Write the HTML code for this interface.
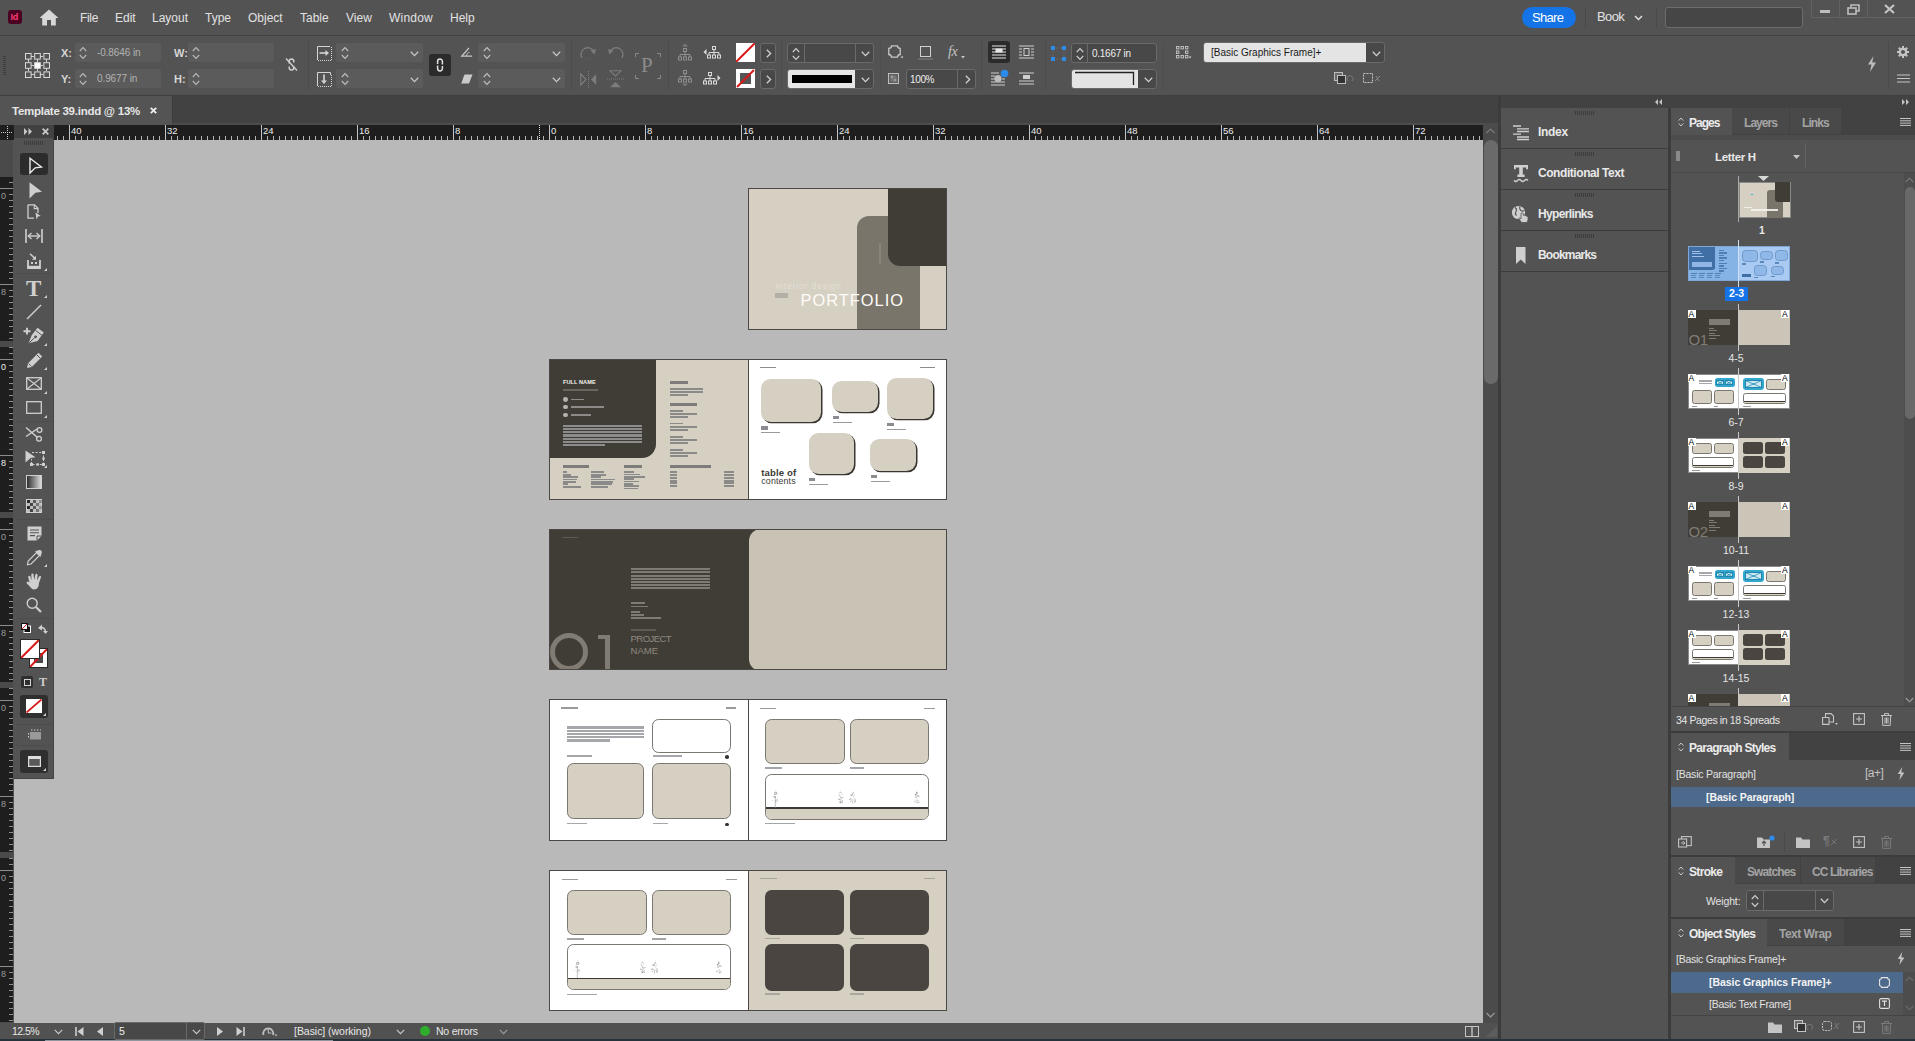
<!DOCTYPE html>
<html><head><meta charset="utf-8"><title>InDesign</title>
<style>
*{box-sizing:border-box;margin:0;padding:0}
html,body{width:1915px;height:1041px;overflow:hidden;background:#535353;font-family:"Liberation Sans",sans-serif;color:#dcdcdc;font-size:12px}
.a{position:absolute}
.t{position:absolute;white-space:nowrap;line-height:1}
svg{position:absolute;overflow:visible}
.fld{position:absolute;background:#5b5b5b;border-radius:2px}
.dfld{position:absolute;background:#484848;border:1px solid #6a6a6a;border-radius:3px}
.sep{position:absolute;background:#4b4b4b;width:1px}
.b{font-weight:bold}
</style></head><body>
<div id="app" class="a" style="left:0;top:0;width:1915px;height:1041px;background:#535353;overflow:hidden">
<!-- frame lines -->
<div class="a" style="left:0;top:35px;width:1915px;height:1px;background:#424242"></div>
<div class="a" style="left:0;top:95px;width:1915px;height:1px;background:#3f3f3f"></div>
<!-- tab bar -->
<div class="a" style="left:0;top:96px;width:1500px;height:29px;background:#424242"></div>
<div class="a" style="left:0;top:123px;width:1498px;height:2px;background:#4c4c4c"></div>
<div class="a" style="left:0;top:96px;width:172px;height:29px;background:#545454"></div><div class="a" style="left:172px;top:96px;width:1px;height:27px;background:#3c3c3c"></div>
<div class="t b" style="left:12px;top:106px;font-size:11.5px;color:#e6e6e6;letter-spacing:-0.26px">Template 39.indd @ 13%</div>
<svg style="left:149.5px;top:106.5px" width="7" height="7" viewBox="0 0 7 7"><path d="M0.8 0.8L6.2 6.2M6.2 0.8L0.8 6.2" stroke="#ececec" stroke-width="1.9"/></svg>
<!-- pasteboard -->
<div class="a" style="left:14px;top:140px;width:1469px;height:883px;background:#b9b9b9"></div>
<!-- vertical scrollbar -->
<div class="a" style="left:1483px;top:125px;width:15px;height:898px;background:#4b4b4b"></div>
<div class="a" style="left:1484px;top:140px;width:14px;height:244px;background:#6a6a6a;border-radius:7px"></div>
<svg style="left:1486px;top:128px" width="9" height="6" viewBox="0 0 9 6"><path d="M0.5 5L4.5 1L8.5 5" stroke="#7a7a7a" stroke-width="1.2" fill="none"/></svg>
<svg style="left:1486px;top:1012px" width="9" height="6" viewBox="0 0 9 6"><path d="M0.5 1L4.5 5L8.5 1" stroke="#9a9a9a" stroke-width="1.2" fill="none"/></svg>
<!-- status bar -->
<div class="a" style="left:0;top:1023px;width:1500px;height:18px;background:#515151"></div>
<!-- dock borders -->
<div class="a" style="left:1498px;top:96px;width:3px;height:945px;background:#3c3c3c"></div>
<div class="a" style="left:1501px;top:96px;width:414px;height:12px;background:#424242"></div>
<div class="a" style="left:1668px;top:108px;width:3px;height:933px;background:#3c3c3c"></div>
<!-- menu bar -->
<div class="a" style="left:8px;top:10px;width:14px;height:14px;background:#49021f;border-radius:3px"></div>
<div class="t b" style="left:10.5px;top:12.5px;font-size:9px;color:#ff3d78;letter-spacing:-0.3px">Id</div>
<svg style="left:39px;top:9px" width="20" height="17" viewBox="0 0 20 17"><path d="M10 0.5L0.5 9H3.2V16.5H8V11H12V16.5H16.8V9H19.5Z" fill="#d8d8d8"/></svg>
<div class="t" style="left:80px;top:12px;font-size:12px;color:#e2e2e2;letter-spacing:-0.33px">File</div>
<div class="t" style="left:115px;top:12px;font-size:12px;color:#e2e2e2">Edit</div>
<div class="t" style="left:152px;top:12px;font-size:12px;color:#e2e2e2">Layout</div>
<div class="t" style="left:205px;top:12px;font-size:12px;color:#e2e2e2">Type</div>
<div class="t" style="left:248px;top:12px;font-size:12px;color:#e2e2e2">Object</div>
<div class="t" style="left:300px;top:12px;font-size:12px;color:#e2e2e2">Table</div>
<div class="t" style="left:346px;top:12px;font-size:12px;color:#e2e2e2">View</div>
<div class="t" style="left:389px;top:12px;font-size:12px;color:#e2e2e2;letter-spacing:0.2px">Window</div>
<div class="t" style="left:450px;top:12px;font-size:12px;color:#e2e2e2">Help</div>
<!-- right side of menu bar -->
<div class="a" style="left:1522px;top:7px;width:54px;height:21px;background:#1473e6;border-radius:11px"></div>
<div class="t" style="left:1532px;top:11px;font-size:13px;color:#fff;letter-spacing:-0.7px">Share</div>
<div class="sep" style="left:1585px;top:8px;height:20px;background:#494949"></div>
<div class="t" style="left:1597px;top:10px;font-size:13px;color:#e4e4e4;letter-spacing:-0.6px">Book</div>
<svg style="left:1634px;top:15px" width="9" height="6" viewBox="0 0 9 6"><path d="M1 1L4.5 4.5L8 1" stroke="#e0e0e0" stroke-width="1.5" fill="none"/></svg>
<div class="sep" style="left:1656px;top:8px;height:20px;background:#494949"></div>
<div class="a" style="left:1665px;top:7px;width:138px;height:21px;background:#464646;border:1px solid #6c6c6c;border-radius:3px"></div>
<!-- window controls -->
<div class="a" style="left:1811px;top:0;width:104px;height:18px;border:1px solid #626262;border-top:0;border-right:0"></div>
<div class="a" style="left:1839px;top:0;width:1px;height:18px;background:#626262"></div>
<div class="a" style="left:1867px;top:0;width:1px;height:18px;background:#626262"></div>
<div class="a" style="left:1820px;top:10px;width:10px;height:3px;background:#bdbdbd"></div>
<svg style="left:1847px;top:4px" width="13" height="11" viewBox="0 0 13 11"><path d="M4 3V1H12V7H9" stroke="#bdbdbd" stroke-width="1.6" fill="none"/><rect x="1" y="4" width="8" height="6" stroke="#bdbdbd" stroke-width="1.6" fill="none"/></svg>
<svg style="left:1884px;top:4px" width="11" height="10" viewBox="0 0 11 10"><path d="M1 1L10 9M10 1L1 9" stroke="#c4c4c4" stroke-width="2.2"/></svg>
<!-- control bar -->
<div class="a" style="left:3px;top:56px;width:3px;height:19px;background:repeating-linear-gradient(to bottom,#3d3d3d 0 1px,transparent 1px 2px)"></div>
<svg style="left:25px;top:53px" width="25" height="25" viewBox="0 0 25 25"><path d="M6 3.5H9M15 3.5H18M6 12.5H9M15 12.5H18M6 21.5H9M15 21.5H18M3.5 6V9M3.5 15V18M12.5 6V9M12.5 15V18M21.5 6V9M21.5 15V18" stroke="#d0d0d0" stroke-width="1"/><rect x="0.5" y="0.5" width="5.6" height="5.6" fill="none" stroke="#dadada" stroke-width="1"/><rect x="9.7" y="0.5" width="5.6" height="5.6" fill="none" stroke="#dadada" stroke-width="1"/><rect x="18.9" y="0.5" width="5.6" height="5.6" fill="none" stroke="#dadada" stroke-width="1"/><rect x="0.5" y="9.7" width="5.6" height="5.6" fill="none" stroke="#dadada" stroke-width="1"/><rect x="9.7" y="9.7" width="5.6" height="5.6" fill="#ffffff" stroke="#dadada" stroke-width="1"/><rect x="18.9" y="9.7" width="5.6" height="5.6" fill="none" stroke="#dadada" stroke-width="1"/><rect x="0.5" y="18.9" width="5.6" height="5.6" fill="none" stroke="#dadada" stroke-width="1"/><rect x="9.7" y="18.9" width="5.6" height="5.6" fill="none" stroke="#dadada" stroke-width="1"/><rect x="18.9" y="18.9" width="5.6" height="5.6" fill="none" stroke="#dadada" stroke-width="1"/></svg>
<div class="t b" style="left:61px;top:48px;font-size:11px;color:#d6d6d6">X:</div>
<div class="t b" style="left:61px;top:74px;font-size:11px;color:#d6d6d6">Y:</div>
<div class="t b" style="left:174px;top:48px;font-size:11px;color:#d6d6d6">W:</div>
<div class="t b" style="left:174px;top:74px;font-size:11px;color:#d6d6d6">H:</div>
<div class="fld" style="left:75px;top:43px;width:86px;height:19px"></div>
<svg style="left:79px;top:46px" width="8" height="14" viewBox="0 0 8 14"><path d="M0.8 5L4 1.6L7.2 5M0.8 9L4 12.4L7.2 9" stroke="#b8b8b8" stroke-width="1.1" fill="none"/></svg>
<div class="fld" style="left:75px;top:69px;width:86px;height:19px"></div>
<svg style="left:79px;top:72px" width="8" height="14" viewBox="0 0 8 14"><path d="M0.8 5L4 1.6L7.2 5M0.8 9L4 12.4L7.2 9" stroke="#b8b8b8" stroke-width="1.1" fill="none"/></svg>
<div class="fld" style="left:188px;top:43px;width:86px;height:19px"></div>
<svg style="left:192px;top:46px" width="8" height="14" viewBox="0 0 8 14"><path d="M0.8 5L4 1.6L7.2 5M0.8 9L4 12.4L7.2 9" stroke="#b8b8b8" stroke-width="1.1" fill="none"/></svg>
<div class="fld" style="left:188px;top:69px;width:86px;height:19px"></div>
<svg style="left:192px;top:72px" width="8" height="14" viewBox="0 0 8 14"><path d="M0.8 5L4 1.6L7.2 5M0.8 9L4 12.4L7.2 9" stroke="#b8b8b8" stroke-width="1.1" fill="none"/></svg>
<div class="t" style="left:97px;top:48px;font-size:10px;color:#b2b2b2;letter-spacing:-0.1px">-0.8646 in</div>
<div class="t" style="left:97px;top:74px;font-size:10px;color:#b2b2b2;letter-spacing:-0.1px">0.9677 in</div>
<svg style="left:284px;top:56px" width="15" height="17" viewBox="0 0 15 17"><path d="M5.2 7.5V5.2A2.3 2.3 0 0 1 9.8 5.2V6.5M9.8 10.5V11.8A2.3 2.3 0 0 1 5.2 11.8V10.5" stroke="#cfcfcf" stroke-width="1.5" fill="none"/><path d="M2 2.5L13 14.5" stroke="#cfcfcf" stroke-width="1.4"/></svg>
<div class="sep" style="left:308px;top:42px;height:47px"></div>
<svg style="left:317px;top:46px" width="15" height="15" viewBox="0 0 15 15"><path d="M0.5 14V0.5H13" stroke="#d4d4d4" stroke-width="1" fill="none"/><path d="M1 14.5H14.5V1" stroke="#d4d4d4" stroke-width="1" fill="none" stroke-dasharray="1 1"/><path d="M2.5 7H9" stroke="#d4d4d4" stroke-width="1.6"/><path d="M8.5 4L12 7L8.5 10Z" fill="#d4d4d4"/></svg>
<svg style="left:317px;top:72px" width="15" height="15" viewBox="0 0 15 15"><path d="M0.5 14V0.5H13.5V3" stroke="#d4d4d4" stroke-width="1" fill="none"/><path d="M1 14.5H14.5V3" stroke="#d4d4d4" stroke-width="1" fill="none" stroke-dasharray="1 1"/><path d="M7 2.5V9" stroke="#d4d4d4" stroke-width="1.6"/><path d="M4 8.5L7 12L10 8.5Z" fill="#d4d4d4"/></svg>
<div class="fld" style="left:336px;top:43px;width:87px;height:19px"></div>
<svg style="left:340.5px;top:46px" width="8" height="14" viewBox="0 0 8 14"><path d="M0.8 5L4 1.6L7.2 5M0.8 9L4 12.4L7.2 9" stroke="#c0c0c0" stroke-width="1.1" fill="none"/></svg>
<svg style="left:409.5px;top:50.5px" width="9" height="6" viewBox="0 0 9 6"><path d="M0.8 0.8L4.5 4.6L8.2 0.8" stroke="#c8c8c8" stroke-width="1.3" fill="none"/></svg>
<div class="fld" style="left:336px;top:69px;width:87px;height:19px"></div>
<svg style="left:340.5px;top:72px" width="8" height="14" viewBox="0 0 8 14"><path d="M0.8 5L4 1.6L7.2 5M0.8 9L4 12.4L7.2 9" stroke="#c0c0c0" stroke-width="1.1" fill="none"/></svg>
<svg style="left:409.5px;top:76.5px" width="9" height="6" viewBox="0 0 9 6"><path d="M0.8 0.8L4.5 4.6L8.2 0.8" stroke="#c8c8c8" stroke-width="1.3" fill="none"/></svg>
<div class="a" style="left:429px;top:54px;width:22px;height:22px;background:#2b2b2b;border-radius:3px"></div>
<svg style="left:436px;top:58px" width="8" height="14" viewBox="0 0 8 14"><path d="M1.6 6V3.4A2.4 2.4 0 0 1 6.4 3.4V6.4M6.4 8V10.6A2.4 2.4 0 0 1 1.6 10.6V7.6" stroke="#e2e2e2" stroke-width="1.5" fill="none"/></svg>
<svg style="left:461px;top:47px" width="12" height="10" viewBox="0 0 12 10"><path d="M8 0.8L0.8 9.2H11.2" stroke="#c8c8c8" stroke-width="1.3" fill="none"/><path d="M5.5 9C5.5 7 6.5 5.5 8.5 5.5" stroke="#c8c8c8" stroke-width="1" fill="none"/></svg>
<svg style="left:461px;top:74px" width="12" height="10" viewBox="0 0 12 10"><path d="M3.5 0.5H11.5L8 9.5H0.2Z" fill="#cacaca"/></svg>
<div class="fld" style="left:478px;top:43px;width:87px;height:19px"></div>
<svg style="left:482.5px;top:46px" width="8" height="14" viewBox="0 0 8 14"><path d="M0.8 5L4 1.6L7.2 5M0.8 9L4 12.4L7.2 9" stroke="#c0c0c0" stroke-width="1.1" fill="none"/></svg>
<svg style="left:551.5px;top:50.5px" width="9" height="6" viewBox="0 0 9 6"><path d="M0.8 0.8L4.5 4.6L8.2 0.8" stroke="#c8c8c8" stroke-width="1.3" fill="none"/></svg>
<div class="fld" style="left:478px;top:69px;width:87px;height:19px"></div>
<svg style="left:482.5px;top:72px" width="8" height="14" viewBox="0 0 8 14"><path d="M0.8 5L4 1.6L7.2 5M0.8 9L4 12.4L7.2 9" stroke="#c0c0c0" stroke-width="1.1" fill="none"/></svg>
<svg style="left:551.5px;top:76.5px" width="9" height="6" viewBox="0 0 9 6"><path d="M0.8 0.8L4.5 4.6L8.2 0.8" stroke="#c8c8c8" stroke-width="1.3" fill="none"/></svg>
<div class="sep" style="left:571px;top:42px;height:47px"></div>
<svg style="left:580px;top:45px" width="17" height="16" viewBox="0 0 17 16"><path d="M2 13A6.5 6.5 0 1 1 13.5 6" stroke="#7c7c7c" stroke-width="1.3" fill="none"/><path d="M10.5 5.5L16 4L14.5 9.5Z" fill="#7c7c7c"/><path d="M12 12A6.5 6.5 0 0 1 4 14" stroke="#666" stroke-width="1" fill="none" stroke-dasharray="1 1.5"/></svg>
<svg style="left:607px;top:45px" width="17" height="16" viewBox="0 0 17 16"><path d="M15 13A6.5 6.5 0 1 0 3.5 6" stroke="#7c7c7c" stroke-width="1.3" fill="none"/><path d="M6.5 5.5L1 4L2.5 9.5Z" fill="#7c7c7c"/><path d="M5 12A6.5 6.5 0 0 0 13 14" stroke="#666" stroke-width="1" fill="none" stroke-dasharray="1 1.5"/></svg>
<svg style="left:580px;top:71px" width="17" height="17" viewBox="0 0 17 17"><path d="M0.8 3L6 8.5L0.8 14Z" stroke="#7c7c7c" stroke-width="1.1" fill="none"/><path d="M16.2 3L11 8.5L16.2 14Z" fill="#7c7c7c"/><path d="M8.5 0V17" stroke="#7c7c7c" stroke-width="1" stroke-dasharray="1 1"/></svg>
<svg style="left:607px;top:70px" width="17" height="18" viewBox="0 0 17 18"><path d="M3 0.8L8.5 6L14 0.8Z" stroke="#7c7c7c" stroke-width="1.1" fill="none"/><path d="M3 17.2L8.5 12L14 17.2Z" fill="#7c7c7c"/><path d="M0 9H17" stroke="#7c7c7c" stroke-width="1" stroke-dasharray="1 1"/></svg>
<svg style="left:635px;top:53px" width="26" height="26" viewBox="0 0 26 26"><path d="M0.5 4V0.5H4M22 0.5H25.5V4M0.5 22V25.5H4M22 25.5H25.5V22" stroke="#8a8a8a" stroke-width="1" fill="none"/></svg>
<div class="t" style="left:641px;top:55px;font-size:21px;color:#8c8c8c;font-family:'Liberation Serif',serif">P</div>
<div class="sep" style="left:668px;top:42px;height:47px"></div>
<svg style="left:675.5px;top:43px" width="18" height="18" viewBox="0 0 18 18"><path d="M6 3.5L9 0.5L12 3.5Z" fill="#7c7c7c"/><g transform="translate(2,5)" stroke="#8e8e8e" stroke-width="1" fill="none"><rect x="5.5" y="0.5" width="3" height="3"/><path d="M7 3.5V6.5M2 9V6.5H12V9M7 6.5V9"/><rect x="0.5" y="9" width="3" height="3"/><rect x="5.5" y="9" width="3" height="3"/><rect x="10.5" y="9" width="3" height="3"/></g></svg>
<svg style="left:703px;top:43px" width="18" height="18" viewBox="0 0 18 18"><path d="M3.5 6L0.5 9L3.5 12Z" fill="#dadada"/><g transform="translate(4,3)" stroke="#dadada" stroke-width="1" fill="none"><rect x="5.5" y="0.5" width="3" height="3"/><path d="M7 3.5V6.5M2 9V6.5H12V9M7 6.5V9"/><rect x="0.5" y="9" width="3" height="3"/><rect x="5.5" y="9" width="3" height="3"/><rect x="10.5" y="9" width="3" height="3"/></g></svg>
<svg style="left:675.5px;top:69px" width="18" height="18" viewBox="0 0 18 18"><path d="M6 14.5L9 17.5L12 14.5Z" fill="#7c7c7c"/><g transform="translate(2,1)" stroke="#8e8e8e" stroke-width="1" fill="none"><rect x="5.5" y="0.5" width="3" height="3"/><path d="M7 3.5V6.5M2 9V6.5H12V9M7 6.5V9"/><rect x="0.5" y="9" width="3" height="3"/><rect x="5.5" y="9" width="3" height="3"/><rect x="10.5" y="9" width="3" height="3"/></g></svg>
<svg style="left:703px;top:69px" width="18" height="18" viewBox="0 0 18 18"><path d="M14.5 6L17.5 9L14.5 12Z" fill="#dadada"/><g transform="translate(0,3)" stroke="#dadada" stroke-width="1" fill="none"><rect x="5.5" y="0.5" width="3" height="3"/><path d="M7 3.5V6.5M2 9V6.5H12V9M7 6.5V9"/><rect x="0.5" y="9" width="3" height="3"/><rect x="5.5" y="9" width="3" height="3"/><rect x="10.5" y="9" width="3" height="3"/></g></svg>
<div class="a" style="left:736px;top:43px;width:19px;height:19px;background:#fff;overflow:hidden"><svg style="left:0;top:0" width="19" height="19"><path d="M0 19L19 0" stroke="#d71a1a" stroke-width="2"/></svg></div>
<div class="dfld" style="left:760px;top:43px;width:16px;height:20px"></div><svg style="left:765.5px;top:48.5px" width="6" height="9" viewBox="0 0 6 9"><path d="M0.8 0.8L4.6 4.5L0.8 8.2" stroke="#d0d0d0" stroke-width="1.3" fill="none"/></svg>
<div class="a" style="left:736px;top:69px;width:19px;height:19px;background:#fff;overflow:hidden"><div class="a" style="left:4px;top:4px;width:11px;height:11px;background:#555"></div><svg style="left:0;top:0" width="19" height="19"><path d="M1 18L18 1" stroke="#d71a1a" stroke-width="2"/></svg></div>
<div class="dfld" style="left:760px;top:69px;width:16px;height:20px"></div><svg style="left:765.5px;top:74.5px" width="6" height="9" viewBox="0 0 6 9"><path d="M0.8 0.8L4.6 4.5L0.8 8.2" stroke="#d0d0d0" stroke-width="1.3" fill="none"/></svg>
<div class="sep" style="left:781px;top:42px;height:47px"></div>
<div class="dfld" style="left:787px;top:43px;width:87px;height:20px"></div>
<div class="a" style="left:804px;top:44px;width:1px;height:18px;background:#6a6a6a"></div><div class="a" style="left:855px;top:44px;width:1px;height:18px;background:#6a6a6a"></div>
<svg style="left:792px;top:46.5px" width="8" height="14" viewBox="0 0 8 14"><path d="M0.8 5L4 1.6L7.2 5M0.8 9L4 12.4L7.2 9" stroke="#d0d0d0" stroke-width="1.1" fill="none"/></svg>
<svg style="left:860.5px;top:50.5px" width="9" height="6" viewBox="0 0 9 6"><path d="M0.8 0.8L4.5 4.6L8.2 0.8" stroke="#d0d0d0" stroke-width="1.3" fill="none"/></svg>
<div class="dfld" style="left:787px;top:69px;width:87px;height:20px"></div>
<div class="a" style="left:788px;top:70px;width:67px;height:18px;background:#e6e6e6;border-radius:2px 0 0 2px"></div><div class="a" style="left:792px;top:75px;width:60px;height:8px;background:#000"></div>
<svg style="left:860.5px;top:76.5px" width="9" height="6" viewBox="0 0 9 6"><path d="M0.8 0.8L4.5 4.6L8.2 0.8" stroke="#d0d0d0" stroke-width="1.3" fill="none"/></svg>
<div class="sep" style="left:880px;top:42px;height:47px;background:#4e4e4e"></div>
<svg style="left:888px;top:45px" width="16" height="14" viewBox="0 0 16 14"><path d="M3.5 0.8H9.5A2.8 2.8 0 0 0 12.2 3.5V9.5A2.8 2.8 0 0 0 9.5 12.2H3.5A2.8 2.8 0 0 0 0.8 9.5V3.5A2.8 2.8 0 0 0 3.5 0.8Z" stroke="#c8c8c8" stroke-width="1.3" fill="none"/><path d="M12.5 11.5H15.5L14 13.5Z" fill="#c8c8c8"/></svg>
<div class="a" style="left:920px;top:46px;width:11px;height:11px;border:1.5px solid #d0d0d0"></div><div class="a" style="left:918px;top:58px;width:15px;height:2px;background:#6a6a6a"></div>
<div class="t" style="left:948px;top:45px;font-size:14px;font-style:italic;color:#c4c4c4;font-family:'Liberation Serif',serif;letter-spacing:-0.5px">fx</div><svg style="left:961px;top:56px" width="4" height="3"><path d="M0 0H4L2 2.5Z" fill="#c4c4c4"/></svg>
<svg style="left:888px;top:73px" width="11" height="11" viewBox="0 0 11 11"><rect x="0.5" y="0.5" width="10" height="10" fill="#5f5f5f" stroke="#bdbdbd"/><rect x="2.5" y="2.5" width="3" height="3" fill="#9a9a9a"/><rect x="5.5" y="5.5" width="3" height="3" fill="#9a9a9a"/><rect x="5.5" y="2.5" width="3" height="3" fill="#777"/><rect x="2.5" y="5.5" width="3" height="3" fill="#777"/></svg>
<div class="dfld" style="left:906px;top:69px;width:70px;height:20px"></div><div class="a" style="left:957px;top:70px;width:1px;height:18px;background:#6a6a6a"></div>
<div class="t" style="left:910px;top:74.5px;font-size:10px;color:#eee;letter-spacing:-0.37px">100%</div><svg style="left:964.5px;top:74.5px" width="6" height="9" viewBox="0 0 6 9"><path d="M0.8 0.8L4.6 4.5L0.8 8.2" stroke="#d0d0d0" stroke-width="1.3" fill="none"/></svg>
<div class="sep" style="left:981px;top:42px;height:47px"></div>
<div class="a" style="left:988px;top:41px;width:22px;height:22px;background:#2b2b2b;border-radius:3px"></div>
<svg style="left:992px;top:45px" width="14" height="14" viewBox="0 0 14 14"><path d="M0 1H14M0 4H14M0 7H14M0 10H14M0 13H14" stroke="#e6e6e6" stroke-width="1"/><rect x="3.5" y="3.5" width="7" height="4" fill="#e6e6e6"/></svg>
<svg style="left:1019px;top:45px" width="15" height="14" viewBox="0 0 15 14"><path d="M0 1H15M0 13H15M0 4H3M0 7H3M0 10H3M12 4H15M12 7H15M12 10H15" stroke="#cfcfcf" stroke-width="1"/><rect x="5" y="3.5" width="5" height="7" fill="none" stroke="#cfcfcf"/></svg>
<svg style="left:991px;top:69px" width="19" height="17" viewBox="0 0 19 17"><path d="M0 4H8M0 7H4M0 10H4M0 13H14M0 16H14M11 10H14" stroke="#cfcfcf" stroke-width="1"/><circle cx="7" cy="9.5" r="3.6" fill="#bdbdbd"/><circle cx="13.5" cy="4.5" r="3.8" fill="#2d8ceb"/></svg>
<svg style="left:1019px;top:72px" width="15" height="13" viewBox="0 0 15 13"><path d="M0 1H15M0 9H15M0 12H15" stroke="#cfcfcf" stroke-width="1"/><rect x="4" y="3" width="7" height="4" fill="#cfcfcf"/></svg>
<div class="sep" style="left:1045px;top:42px;height:47px"></div>
<svg style="left:1051px;top:46px" width="15" height="15" viewBox="0 0 15 15"><rect x="2" y="2" width="11" height="11" fill="none" stroke="#6a6a6a" stroke-dasharray="2 1.5"/><rect x="0" y="0" width="4" height="4" fill="#2d8ceb"/><rect x="11" y="0" width="4" height="4" fill="#2d8ceb"/><rect x="0" y="11" width="4" height="4" fill="#2d8ceb"/><rect x="11" y="11" width="4" height="4" fill="#2d8ceb"/></svg>
<div class="dfld" style="left:1071px;top:43px;width:86px;height:20px"></div><div class="a" style="left:1087px;top:44px;width:1px;height:18px;background:#6a6a6a"></div>
<svg style="left:1075.5px;top:46.5px" width="8" height="14" viewBox="0 0 8 14"><path d="M0.8 5L4 1.6L7.2 5M0.8 9L4 12.4L7.2 9" stroke="#d0d0d0" stroke-width="1.1" fill="none"/></svg>
<div class="t" style="left:1092px;top:48.5px;font-size:10px;color:#eee;letter-spacing:-0.26px">0.1667 in</div>
<div class="dfld" style="left:1071px;top:69px;width:86px;height:20px"></div>
<div class="a" style="left:1072px;top:70px;width:66px;height:18px;background:#e4e4e4;border-radius:2px 0 0 2px"></div>
<svg style="left:1072px;top:70px" width="66" height="18"><path d="M3 2.5H61.5V15" stroke="#222" stroke-width="1.3" fill="none"/></svg>
<svg style="left:1143.5px;top:76.5px" width="9" height="6" viewBox="0 0 9 6"><path d="M0.8 0.8L4.5 4.6L8.2 0.8" stroke="#d0d0d0" stroke-width="1.3" fill="none"/></svg>
<div class="sep" style="left:1163px;top:42px;height:47px;background:#4e4e4e"></div>
<svg style="left:1176px;top:46px" width="16" height="13" viewBox="0 0 16 13"><rect x="0.5" y="0.5" width="2.4" height="2.4" fill="none" stroke="#c8c8c8" stroke-width="0.9"/><rect x="5.0" y="0.5" width="2.4" height="2.4" fill="none" stroke="#c8c8c8" stroke-width="0.9"/><rect x="9.5" y="0.5" width="2.4" height="2.4" fill="none" stroke="#c8c8c8" stroke-width="0.9"/><rect x="0.5" y="5.0" width="2.4" height="2.4" fill="none" stroke="#c8c8c8" stroke-width="0.9"/><rect x="9.5" y="5.0" width="2.4" height="2.4" fill="none" stroke="#c8c8c8" stroke-width="0.9"/><rect x="0.5" y="9.5" width="2.4" height="2.4" fill="none" stroke="#c8c8c8" stroke-width="0.9"/><rect x="5.0" y="9.5" width="2.4" height="2.4" fill="none" stroke="#c8c8c8" stroke-width="0.9"/><rect x="9.5" y="9.5" width="2.4" height="2.4" fill="none" stroke="#c8c8c8" stroke-width="0.9"/><path d="M12.5 10.5H15.5L14 12.5Z" fill="#c8c8c8"/></svg>
<div class="a" style="left:1203px;top:42px;width:182px;height:21px;background:#484848;border:1px solid #6a6a6a;border-radius:3px"></div>
<div class="a" style="left:1204px;top:43px;width:162px;height:19px;background:#e4e4e4;border-radius:2px 0 0 2px"></div>
<div class="t" style="left:1211px;top:48px;font-size:10px;color:#1a1a1a">[Basic Graphics Frame]+</div>
<svg style="left:1371.5px;top:50.5px" width="9" height="6" viewBox="0 0 9 6"><path d="M0.8 0.8L4.5 4.6L8.2 0.8" stroke="#d0d0d0" stroke-width="1.3" fill="none"/></svg>
<svg style="left:1334px;top:72px" width="20" height="13" viewBox="0 0 20 13"><rect x="0.5" y="0.5" width="8" height="8" fill="#6a6a6a" stroke="#bdbdbd"/><rect x="3.5" y="3.5" width="8" height="8" fill="#333" stroke="#bdbdbd"/><path d="M14 9A3 3 0 1 1 18 9" stroke="#7a7a7a" fill="none"/></svg>
<svg style="left:1363px;top:73px" width="18" height="11" viewBox="0 0 18 11"><rect x="0.5" y="0.5" width="9" height="9" fill="none" stroke="#c4c4c4" stroke-dasharray="2 1"/><path d="M12 8L17 3M13 3L16 8" stroke="#8a8a8a" stroke-width="1"/></svg>
<svg style="left:1867px;top:56px" width="10" height="16" viewBox="0 0 10 16"><path d="M6.5 0L1 8.5H4.5L3 16L9 6.5H5.2Z" fill="#bdbdbd"/></svg>
<div class="sep" style="left:1888px;top:42px;height:47px"></div>
<svg style="left:1897px;top:46px" width="12" height="12" viewBox="0 0 12 12"><circle cx="6" cy="6" r="3.2" fill="none" stroke="#c6c6c6" stroke-width="2.2"/><g stroke="#c6c6c6" stroke-width="2"><path d="M6 0V2.2M6 9.8V12M0 6H2.2M9.8 6H12M1.8 1.8L3.3 3.3M8.7 8.7L10.2 10.2M1.8 10.2L3.3 8.7M8.7 3.3L10.2 1.8"/></g></svg>
<svg style="left:1897px;top:74px" width="13" height="9" viewBox="0 0 13 9"><path d="M0 1H13M0 4.5H13M0 8H13" stroke="#c6c6c6" stroke-width="1.1"/></svg>
<!-- horizontal ruler -->
<div class="a" style="left:0;top:125px;width:1483px;height:15px;background:#1e1e1e"></div>
<div class="a" style="left:57px;top:136px;width:1426px;height:4px;background:repeating-linear-gradient(to right,#b4b4b4 0 1px,transparent 1px 6px)"></div>
<div class="a" style="left:69px;top:125px;width:1px;height:15px;background:#c4c4c4"></div>
<div class="t" style="left:71px;top:126px;font-size:9.5px;color:#ececec;letter-spacing:-0.1px">40</div>
<div class="a" style="left:165px;top:125px;width:1px;height:15px;background:#c4c4c4"></div>
<div class="t" style="left:167px;top:126px;font-size:9.5px;color:#ececec;letter-spacing:-0.1px">32</div>
<div class="a" style="left:261px;top:125px;width:1px;height:15px;background:#c4c4c4"></div>
<div class="t" style="left:263px;top:126px;font-size:9.5px;color:#ececec;letter-spacing:-0.1px">24</div>
<div class="a" style="left:357px;top:125px;width:1px;height:15px;background:#c4c4c4"></div>
<div class="t" style="left:359px;top:126px;font-size:9.5px;color:#ececec;letter-spacing:-0.1px">16</div>
<div class="a" style="left:453px;top:125px;width:1px;height:15px;background:#c4c4c4"></div>
<div class="t" style="left:455px;top:126px;font-size:9.5px;color:#ececec;letter-spacing:-0.1px">8</div>
<div class="a" style="left:549px;top:125px;width:1px;height:15px;background:#c4c4c4"></div>
<div class="t" style="left:551px;top:126px;font-size:9.5px;color:#ececec;letter-spacing:-0.1px">0</div>
<div class="a" style="left:645px;top:125px;width:1px;height:15px;background:#c4c4c4"></div>
<div class="t" style="left:647px;top:126px;font-size:9.5px;color:#ececec;letter-spacing:-0.1px">8</div>
<div class="a" style="left:741px;top:125px;width:1px;height:15px;background:#c4c4c4"></div>
<div class="t" style="left:743px;top:126px;font-size:9.5px;color:#ececec;letter-spacing:-0.1px">16</div>
<div class="a" style="left:837px;top:125px;width:1px;height:15px;background:#c4c4c4"></div>
<div class="t" style="left:839px;top:126px;font-size:9.5px;color:#ececec;letter-spacing:-0.1px">24</div>
<div class="a" style="left:933px;top:125px;width:1px;height:15px;background:#c4c4c4"></div>
<div class="t" style="left:935px;top:126px;font-size:9.5px;color:#ececec;letter-spacing:-0.1px">32</div>
<div class="a" style="left:1029px;top:125px;width:1px;height:15px;background:#c4c4c4"></div>
<div class="t" style="left:1031px;top:126px;font-size:9.5px;color:#ececec;letter-spacing:-0.1px">40</div>
<div class="a" style="left:1125px;top:125px;width:1px;height:15px;background:#c4c4c4"></div>
<div class="t" style="left:1127px;top:126px;font-size:9.5px;color:#ececec;letter-spacing:-0.1px">48</div>
<div class="a" style="left:1221px;top:125px;width:1px;height:15px;background:#c4c4c4"></div>
<div class="t" style="left:1223px;top:126px;font-size:9.5px;color:#ececec;letter-spacing:-0.1px">56</div>
<div class="a" style="left:1317px;top:125px;width:1px;height:15px;background:#c4c4c4"></div>
<div class="t" style="left:1319px;top:126px;font-size:9.5px;color:#ececec;letter-spacing:-0.1px">64</div>
<div class="a" style="left:1413px;top:125px;width:1px;height:15px;background:#c4c4c4"></div>
<div class="t" style="left:1415px;top:126px;font-size:9.5px;color:#ececec;letter-spacing:-0.1px">72</div>
<div class="a" style="left:539px;top:125px;width:1px;height:15px;background:repeating-linear-gradient(to bottom,#e0e0e0 0 1px,transparent 1px 2px)"></div>
<!-- vertical ruler -->
<div class="a" style="left:0;top:140px;width:13px;height:883px;background:#4a4a4a"></div>
<div class="a" style="left:0;top:177px;width:13px;height:164px;background:#1e1e1e;overflow:hidden">
<div class="a" style="left:9px;top:-1px;width:4px;height:176px;background:repeating-linear-gradient(to bottom,#8e8e8e 0 1px,transparent 1px 6px)"></div>
<div class="a" style="left:0;top:11px;width:13px;height:1px;background:#8c8c8c"></div>
<div class="t" style="left:1px;top:15px;font-size:9px;color:#9c9c9c">0</div>
<div class="a" style="left:0;top:107px;width:13px;height:1px;background:#8c8c8c"></div>
<div class="t" style="left:1px;top:111px;font-size:9px;color:#9c9c9c">8</div>
</div>
<div class="a" style="left:0;top:347px;width:13px;height:165px;background:#1e1e1e;overflow:hidden">
<div class="a" style="left:9px;top:-6px;width:4px;height:177px;background:repeating-linear-gradient(to bottom,#8e8e8e 0 1px,transparent 1px 6px)"></div>
<div class="a" style="left:0;top:12px;width:13px;height:1px;background:#8c8c8c"></div>
<div class="t" style="left:1px;top:16px;font-size:9px;color:#f0f0f0">0</div>
<div class="a" style="left:0;top:108px;width:13px;height:1px;background:#8c8c8c"></div>
<div class="t" style="left:1px;top:112px;font-size:9px;color:#f0f0f0">8</div>
</div>
<div class="a" style="left:0;top:518px;width:13px;height:164px;background:#1e1e1e;overflow:hidden">
<div class="a" style="left:9px;top:-1px;width:4px;height:176px;background:repeating-linear-gradient(to bottom,#8e8e8e 0 1px,transparent 1px 6px)"></div>
<div class="a" style="left:0;top:11px;width:13px;height:1px;background:#8c8c8c"></div>
<div class="t" style="left:1px;top:15px;font-size:9px;color:#9c9c9c">0</div>
<div class="a" style="left:0;top:107px;width:13px;height:1px;background:#8c8c8c"></div>
<div class="t" style="left:1px;top:111px;font-size:9px;color:#9c9c9c">8</div>
</div>
<div class="a" style="left:0;top:688px;width:13px;height:164px;background:#1e1e1e;overflow:hidden">
<div class="a" style="left:9px;top:-6px;width:4px;height:176px;background:repeating-linear-gradient(to bottom,#8e8e8e 0 1px,transparent 1px 6px)"></div>
<div class="a" style="left:0;top:12px;width:13px;height:1px;background:#8c8c8c"></div>
<div class="t" style="left:1px;top:16px;font-size:9px;color:#9c9c9c">0</div>
<div class="a" style="left:0;top:108px;width:13px;height:1px;background:#8c8c8c"></div>
<div class="t" style="left:1px;top:112px;font-size:9px;color:#9c9c9c">8</div>
</div>
<div class="a" style="left:0;top:858px;width:13px;height:164px;background:#1e1e1e;overflow:hidden">
<div class="a" style="left:9px;top:-6px;width:4px;height:176px;background:repeating-linear-gradient(to bottom,#8e8e8e 0 1px,transparent 1px 6px)"></div>
<div class="a" style="left:0;top:12px;width:13px;height:1px;background:#8c8c8c"></div>
<div class="t" style="left:1px;top:16px;font-size:9px;color:#9c9c9c">0</div>
<div class="a" style="left:0;top:108px;width:13px;height:1px;background:#8c8c8c"></div>
<div class="t" style="left:1px;top:112px;font-size:9px;color:#9c9c9c">8</div>
</div>
<div class="a" style="left:0;top:125px;width:14px;height:15px;background:#1e1e1e"></div>
<div class="a" style="left:1px;top:132px;width:12px;height:1px;background:repeating-linear-gradient(to right,#d0d0d0 0 1px,transparent 1px 2px)"></div>
<div class="a" style="left:7px;top:126px;width:1px;height:13px;background:repeating-linear-gradient(to bottom,#d0d0d0 0 1px,transparent 1px 2px)"></div>
<!-- canvas spreads -->
<div class="a" style="left:14px;top:140px;width:1469px;height:883px;overflow:hidden"><div class="a" style="left:-14px;top:-140px;width:1915px;height:1041px">
<div class="a" style="left:748px;top:188px;width:199px;height:142px;background:#d6d0c3;border:1px solid #4a4744;overflow:hidden">
<div class="a" style="left:108.2px;top:26.7px;width:62.4px;height:120.0px;background:#79756a;border-radius:12px 0 0 0"></div>
<div class="a" style="left:139.0px;top:-9.0px;width:70.0px;height:85.8px;background:#403d37;border-radius:0 0 0 12px"></div>
<div class="a" style="left:129.6px;top:53.5px;width:2.0px;height:21.5px;background:#8a8579"></div>
<div class="a" style="left:26.4px;top:104.4px;width:12.8px;height:4.2px;background:#b3afa6"></div>
<div class="t" style="left:26.4px;top:93.4px;font-size:8.6px;color:#e4dfd5;letter-spacing:0.82px">interior design</div>
<div class="t" style="left:51.6px;top:102.8px;font-size:16.4px;color:#fdfcf8;letter-spacing:1.0px">PORTFOLIO</div>
</div>
<div class="a" style="left:549px;top:359px;width:398px;height:141px;background:#d6d0c3;border:1px solid #4a4744;overflow:hidden">
<div class="a" style="left:-10.0px;top:-10.0px;width:116.0px;height:108.0px;background:#403d37;border-radius:0 0 14px 0"></div>
<div class="t b" style="left:13px;top:20.2px;font-size:5.6px;color:#f4f2ec;letter-spacing:0.05px">FULL NAME</div>
<div class="a" style="left:13.0px;top:29.4px;width:34.5px;height:1.3px;background:#6a665e"></div>
<div class="a" style="left:13.0px;top:36.9px;width:4.8px;height:4.8px;background:#b4b2ad;border-radius:50%"></div>
<div class="a" style="left:20.6px;top:38.5px;width:13.6px;height:1.5px;background:#8d8b87"></div>
<div class="a" style="left:13.0px;top:44.6px;width:4.8px;height:4.8px;background:#b4b2ad;border-radius:50%"></div>
<div class="a" style="left:20.6px;top:46.2px;width:33.7px;height:1.5px;background:#8d8b87"></div>
<div class="a" style="left:13.0px;top:52.5px;width:4.8px;height:4.8px;background:#b4b2ad;border-radius:50%"></div>
<div class="a" style="left:20.6px;top:54.1px;width:20.4px;height:1.5px;background:#8d8b87"></div>
<div class="a" style="left:13.0px;top:64.8px;width:78.6px;height:2.3px;background:#8c8c8c"></div>
<div class="a" style="left:13.0px;top:68.0px;width:78.6px;height:2.3px;background:#8c8c8c"></div>
<div class="a" style="left:13.0px;top:71.2px;width:78.6px;height:2.3px;background:#8c8c8c"></div>
<div class="a" style="left:13.0px;top:74.4px;width:78.6px;height:2.3px;background:#8c8c8c"></div>
<div class="a" style="left:13.0px;top:77.6px;width:78.6px;height:2.3px;background:#8c8c8c"></div>
<div class="a" style="left:13.0px;top:80.8px;width:78.6px;height:2.3px;background:#8c8c8c"></div>
<div class="a" style="left:13.0px;top:84.0px;width:42.0px;height:2.3px;background:#8c8c8c"></div>
<div class="a" style="left:120.0px;top:20.8px;width:17.7px;height:3.0px;background:#7d7c7a"></div>
<div class="a" style="left:120.0px;top:28.2px;width:33.0px;height:2.2px;background:#8a8a88"></div>
<div class="a" style="left:120.0px;top:31.2px;width:33.0px;height:2.2px;background:#8a8a88"></div>
<div class="a" style="left:120.0px;top:34.2px;width:17.7px;height:2.0px;background:#8a8a88"></div>
<div class="a" style="left:120.0px;top:42.6px;width:27.0px;height:3.0px;background:#7d7c7a"></div>
<div class="a" style="left:120.0px;top:50.0px;width:13.0px;height:1.8px;background:#8a8a88"></div>
<div class="a" style="left:120.0px;top:52.9px;width:27.0px;height:2.2px;background:#8a8a88"></div>
<div class="a" style="left:120.0px;top:56.0px;width:18.0px;height:1.9px;background:#8a8a88"></div>
<div class="a" style="left:120.0px;top:62.7px;width:13.0px;height:1.8px;background:#8a8a88"></div>
<div class="a" style="left:120.0px;top:65.6px;width:27.0px;height:2.2px;background:#8a8a88"></div>
<div class="a" style="left:120.0px;top:68.7px;width:18.0px;height:1.9px;background:#8a8a88"></div>
<div class="a" style="left:120.0px;top:76.0px;width:13.0px;height:1.8px;background:#8a8a88"></div>
<div class="a" style="left:120.0px;top:78.9px;width:27.0px;height:2.2px;background:#8a8a88"></div>
<div class="a" style="left:120.0px;top:82.0px;width:18.0px;height:1.9px;background:#8a8a88"></div>
<div class="a" style="left:120.0px;top:89.0px;width:13.0px;height:1.8px;background:#8a8a88"></div>
<div class="a" style="left:120.0px;top:91.9px;width:27.0px;height:2.2px;background:#8a8a88"></div>
<div class="a" style="left:120.0px;top:95.0px;width:18.0px;height:1.9px;background:#8a8a88"></div>
<div class="a" style="left:13.0px;top:105.0px;width:26.0px;height:2.6px;background:#7d7c7a"></div>
<div class="a" style="left:74.0px;top:105.0px;width:18.0px;height:2.6px;background:#7d7c7a"></div>
<div class="a" style="left:120.0px;top:105.0px;width:41.0px;height:2.6px;background:#7d7c7a"></div>
<div class="a" style="left:13.0px;top:111.4px;width:4.0px;height:1.9px;background:#8a8a88"></div>
<div class="a" style="left:13.0px;top:113.8px;width:8.0px;height:1.9px;background:#8a8a88"></div>
<div class="a" style="left:13.0px;top:116.2px;width:15.0px;height:1.9px;background:#8a8a88"></div>
<div class="a" style="left:13.0px;top:118.6px;width:14.0px;height:1.9px;background:#8a8a88"></div>
<div class="a" style="left:13.0px;top:121.0px;width:13.0px;height:1.9px;background:#8a8a88"></div>
<div class="a" style="left:13.0px;top:123.4px;width:5.0px;height:1.9px;background:#8a8a88"></div>
<div class="a" style="left:13.0px;top:125.8px;width:18.0px;height:1.9px;background:#8a8a88"></div>
<div class="a" style="left:41.4px;top:111.4px;width:13.0px;height:1.9px;background:#8a8a88"></div>
<div class="a" style="left:41.4px;top:113.8px;width:15.0px;height:1.9px;background:#8a8a88"></div>
<div class="a" style="left:41.4px;top:116.2px;width:10.0px;height:1.9px;background:#8a8a88"></div>
<div class="a" style="left:41.4px;top:118.6px;width:24.0px;height:1.9px;background:#8a8a88"></div>
<div class="a" style="left:41.4px;top:121.0px;width:22.0px;height:1.9px;background:#8a8a88"></div>
<div class="a" style="left:41.4px;top:123.4px;width:21.0px;height:1.9px;background:#8a8a88"></div>
<div class="a" style="left:41.4px;top:125.8px;width:17.0px;height:1.9px;background:#8a8a88"></div>
<div class="a" style="left:74.0px;top:111.4px;width:10.0px;height:1.8px;background:#8a8a88"></div>
<div class="a" style="left:74.0px;top:113.7px;width:16.0px;height:1.8px;background:#8a8a88"></div>
<div class="a" style="left:74.0px;top:116.0px;width:21.0px;height:1.8px;background:#8a8a88"></div>
<div class="a" style="left:74.0px;top:118.3px;width:10.0px;height:1.8px;background:#8a8a88"></div>
<div class="a" style="left:74.0px;top:120.6px;width:15.0px;height:1.8px;background:#8a8a88"></div>
<div class="a" style="left:74.0px;top:122.9px;width:9.0px;height:1.8px;background:#8a8a88"></div>
<div class="a" style="left:74.0px;top:125.2px;width:15.0px;height:1.8px;background:#8a8a88"></div>
<div class="a" style="left:74.0px;top:127.5px;width:14.0px;height:1.8px;background:#8a8a88"></div>
<div class="a" style="left:120.0px;top:110.8px;width:6.8px;height:2.1px;background:#8a8a88"></div>
<div class="a" style="left:120.0px;top:113.7px;width:6.8px;height:2.1px;background:#8a8a88"></div>
<div class="a" style="left:120.0px;top:116.6px;width:6.8px;height:2.1px;background:#8a8a88"></div>
<div class="a" style="left:120.0px;top:119.5px;width:6.8px;height:2.1px;background:#8a8a88"></div>
<div class="a" style="left:120.0px;top:122.4px;width:6.8px;height:2.1px;background:#8a8a88"></div>
<div class="a" style="left:120.0px;top:125.3px;width:6.8px;height:2.1px;background:#8a8a88"></div>
<div class="a" style="left:174.0px;top:110.8px;width:10.0px;height:2.1px;background:#8a8a88"></div>
<div class="a" style="left:174.0px;top:113.7px;width:10.0px;height:2.1px;background:#8a8a88"></div>
<div class="a" style="left:174.0px;top:116.6px;width:10.0px;height:2.1px;background:#8a8a88"></div>
<div class="a" style="left:174.0px;top:119.5px;width:10.0px;height:2.1px;background:#8a8a88"></div>
<div class="a" style="left:174.0px;top:122.4px;width:10.0px;height:2.1px;background:#8a8a88"></div>
<div class="a" style="left:174.0px;top:125.3px;width:10.0px;height:2.1px;background:#8a8a88"></div>
<div class="a" style="left:199.0px;top:0.0px;width:197.0px;height:139.0px;background:#fff"></div>
<div class="a" style="left:198.0px;top:0.0px;width:1.0px;height:139.0px;background:#4a4744"></div>
<div class="a" style="left:210.0px;top:6.9px;width:16.2px;height:1.2px;background:#8c8c8c"></div>
<div class="a" style="left:370.0px;top:6.9px;width:14.8px;height:1.2px;background:#8c8c8c"></div>
<div class="a" style="left:211.0px;top:18.6px;width:59.6px;height:43.8px;background:#d6d0c3;border-radius:9.5px;box-shadow:1.3px 1.1px 0 0.2px #3a3732;"></div>
<div class="a" style="left:282.3px;top:20.8px;width:45.7px;height:31.2px;background:#d6d0c3;border-radius:9.5px;box-shadow:1.3px 1.1px 0 0.2px #3a3732;"></div>
<div class="a" style="left:337.2px;top:17.9px;width:45.5px;height:41.5px;background:#d6d0c3;border-radius:9.5px;box-shadow:1.3px 1.1px 0 0.2px #3a3732;"></div>
<div class="a" style="left:258.8px;top:73.3px;width:45.6px;height:40.9px;background:#d6d0c3;border-radius:9.5px;box-shadow:1.3px 1.1px 0 0.2px #3a3732;"></div>
<div class="a" style="left:320.4px;top:79.3px;width:45.7px;height:31.9px;background:#d6d0c3;border-radius:9.5px;box-shadow:1.3px 1.1px 0 0.2px #3a3732;"></div>
<div class="a" style="left:211.0px;top:66.4px;width:6.6px;height:3.2px;background:#8a8c8f"></div>
<div class="a" style="left:211.0px;top:71.8px;width:19.3px;height:1.6px;background:#9a9a9a"></div>
<div class="a" style="left:282.5px;top:56.3px;width:6.6px;height:3.2px;background:#8a8c8f"></div>
<div class="a" style="left:282.5px;top:61.9px;width:19.3px;height:1.6px;background:#9a9a9a"></div>
<div class="a" style="left:337.2px;top:63.3px;width:6.6px;height:3.2px;background:#8a8c8f"></div>
<div class="a" style="left:337.2px;top:68.5px;width:19.3px;height:1.6px;background:#9a9a9a"></div>
<div class="a" style="left:258.8px;top:118.1px;width:6.6px;height:3.2px;background:#8a8c8f"></div>
<div class="a" style="left:258.8px;top:123.8px;width:19.3px;height:1.6px;background:#9a9a9a"></div>
<div class="a" style="left:320.5px;top:115.2px;width:6.6px;height:3.2px;background:#8a8c8f"></div>
<div class="a" style="left:320.5px;top:120.7px;width:19.3px;height:1.6px;background:#9a9a9a"></div>
<div class="t b" style="left:211.29999999999995px;top:107.60000000000002px;font-size:9.6px;color:#3d3a35;letter-spacing:0.1px">table of</div>
<div class="t" style="left:211.29999999999995px;top:116.60000000000002px;font-size:8.8px;color:#3d3a35;letter-spacing:0.15px">contents</div>
</div>
<div class="a" style="left:549px;top:529px;width:398px;height:141px;background:#403d37;border:1px solid #4a4744;overflow:hidden">
<div class="a" style="left:11.7px;top:7.2px;width:16.6px;height:1.2px;background:#5d5a52"></div>
<div class="a" style="left:80.8px;top:38.1px;width:79.2px;height:2.2px;background:#7e7a74"></div>
<div class="a" style="left:80.8px;top:41.3px;width:79.2px;height:2.2px;background:#7e7a74"></div>
<div class="a" style="left:80.8px;top:44.5px;width:79.2px;height:2.2px;background:#7e7a74"></div>
<div class="a" style="left:80.8px;top:47.7px;width:79.2px;height:2.2px;background:#7e7a74"></div>
<div class="a" style="left:80.8px;top:50.9px;width:79.2px;height:2.2px;background:#7e7a74"></div>
<div class="a" style="left:80.8px;top:54.1px;width:79.2px;height:2.2px;background:#7e7a74"></div>
<div class="a" style="left:80.8px;top:57.3px;width:79.2px;height:2.2px;background:#7e7a74"></div>
<div class="a" style="left:80.8px;top:72.4px;width:14.5px;height:1.7px;background:#7e7a74"></div>
<div class="a" style="left:80.8px;top:75.6px;width:17.0px;height:1.9px;background:#7e7a74"></div>
<div class="a" style="left:80.8px;top:81.0px;width:9.2px;height:1.6px;background:#7e7a74"></div>
<div class="a" style="left:80.8px;top:84.0px;width:13.2px;height:1.8px;background:#7e7a74"></div>
<div class="a" style="left:80.8px;top:87.1px;width:30.7px;height:2.0px;background:#7e7a74"></div>
<div class="a" style="left:80.8px;top:98.8px;width:25.2px;height:1.9px;background:#5f5b54"></div>
<div class="t" style="left:80.5px;top:103.60000000000002px;font-size:9.6px;color:#8d887f;letter-spacing:-0.6px">PROJECT</div>
<div class="t" style="left:80.5px;top:115.5px;font-size:9.6px;color:#8d887f;letter-spacing:0px">NAME</div>
<div class="a" style="left:0.0px;top:103.0px;width:38.4px;height:38.4px;border:5px solid #807b73;border-radius:50%"></div>
<div class="a" style="left:54.7px;top:104.7px;width:5.2px;height:40.0px;background:#807b73"></div>
<div class="a" style="left:47.5px;top:104.7px;width:8.0px;height:4.8px;background:#807b73"></div>
<div class="a" style="left:198.8px;top:-1.0px;width:210.0px;height:142.0px;background:#c9c3b5;border-radius:12px 0 0 12px"></div>
</div>
<div class="a" style="left:549px;top:699px;width:398px;height:142px;background:#fff;border:1px solid #4a4744;overflow:hidden">
<div class="a" style="left:198.0px;top:0.0px;width:1.0px;height:140.0px;background:#4a4744"></div>
<div class="a" style="left:11.4px;top:7.4px;width:16.6px;height:1.2px;background:#9a9a9a"></div>
<div class="a" style="left:175.6px;top:7.4px;width:10.4px;height:1.2px;background:#9a9a9a"></div>
<div class="a" style="left:17.2px;top:26.3px;width:76.9px;height:2.5px;background:#a5a7aa"></div>
<div class="a" style="left:17.2px;top:29.5px;width:76.9px;height:2.5px;background:#a5a7aa"></div>
<div class="a" style="left:17.2px;top:32.7px;width:76.9px;height:2.5px;background:#a5a7aa"></div>
<div class="a" style="left:17.2px;top:35.9px;width:76.9px;height:2.5px;background:#a5a7aa"></div>
<div class="a" style="left:17.2px;top:39.1px;width:43.3px;height:2.5px;background:#a5a7aa"></div>
<div class="a" style="left:102.4px;top:19.4px;width:78.2px;height:33.2px;background:#fff;border:1px solid #7a7770;border-radius:6.5px"></div>
<div class="a" style="left:17.2px;top:55.2px;width:24.8px;height:1.7px;background:#a5a7aa"></div>
<div class="a" style="left:103.0px;top:55.2px;width:29.0px;height:1.7px;background:#a5a7aa"></div>
<div class="a" style="left:175.2px;top:55.0px;width:3.6px;height:3.6px;background:#333;border-radius:50%"></div>
<div class="a" style="left:17.2px;top:63.3px;width:76.5px;height:56.2px;background:#d6d0c3;border:1px solid #7a7770;border-radius:6.5px"></div>
<div class="a" style="left:102.4px;top:63.3px;width:78.2px;height:56.2px;background:#d6d0c3;border:1px solid #7a7770;border-radius:6.5px"></div>
<div class="a" style="left:17.2px;top:122.8px;width:20.0px;height:1.7px;background:#a5a7aa"></div>
<div class="a" style="left:103.0px;top:122.8px;width:14.6px;height:1.7px;background:#a5a7aa"></div>
<div class="a" style="left:175.2px;top:122.9px;width:3.6px;height:3.6px;background:#333;border-radius:50%"></div>
<div class="a" style="left:209.9px;top:7.6px;width:16.4px;height:1.2px;background:#9a9a9a"></div>
<div class="a" style="left:373.7px;top:7.6px;width:11.0px;height:1.2px;background:#9a9a9a"></div>
<div class="a" style="left:215.2px;top:19.1px;width:79.5px;height:45.4px;background:#d6d0c3;border:1px solid #7a7770;border-radius:6.5px"></div>
<div class="a" style="left:300.3px;top:19.1px;width:78.7px;height:45.4px;background:#d6d0c3;border:1px solid #7a7770;border-radius:6.5px"></div>
<div class="a" style="left:215.2px;top:67.1px;width:16.5px;height:1.7px;background:#a3a5a8"></div>
<div class="a" style="left:300.3px;top:67.1px;width:14.2px;height:1.7px;background:#a3a5a8"></div>
<div class="a" style="left:215.2px;top:74.0px;width:163.8px;height:45.5px;background:#fff;border:1px solid #7a7770;border-radius:6.5px;overflow:hidden"><div class="a" style="left:0;top:32.4px;width:170px;height:1.3px;background:#3d3a35"></div><div class="a" style="left:0;top:33.7px;width:170px;height:12px;background:#d6d0c3"></div></div>
<svg style="left:215.2px;top:89.6px" width="164" height="19" viewBox="0 0 164 19"><g transform="translate(5.3,0)"><path d="M6.0 3.5l0.6 -0.5M4.8 7.4l0.3 0.6M3.7 3.0l0.7 -0.1M2.2 10.4l-0.1 0.4M6.5 4.5l0.9 -0.9M5.1 2.3l1.0 -0.2M4.7 4.4l-1.0 -0.6M5.0 6.8l-0.6 -0.5M4.9 4.4l-0.5 -1.0M5.3 11.2l0.3 -0.6M6.1 12.9l-0.8 -0.3M6.3 9.9l1.0 -0.2M5.8 11.1l-0.4 0.2M6.5 11.7l0.0 0.2M4.4 2.4l0.7 -0.2M5.2 3.9l0.4 0.3M4.7 6.1l0.0 0.6M4.5 7.7l-0.0 -0.9M5.5 2.5l1.1 0.2M3.6 6.3l0.0 1.0M5.2 10.5l0.8 -0.5M7.2 7.7l0.2 -0.1M5.2 5.0l1.0 -1.0M6.7 10.6l0.8 0.5M5.1 10.9l0.1 -0.1M5.9 2.6l0.2 -0.6" stroke="#929292" stroke-width="0.75" fill="none"/><path d="M5 6V18" stroke="#9a9a9a" stroke-width="0.6"/><path d="M5.0 0.5l0.6 0.6" stroke="#b4b4b4" stroke-width="0.5"/></g><g transform="translate(70.8,0)"><path d="M6.6 12.5l-1.0 -0.8M6.1 11.2l0.4 -0.4M5.6 8.7l0.2 -0.7M4.5 6.7l0.5 1.0M5.2 12.4l-0.1 -0.5M3.9 2.4l-0.1 -0.4M6.7 6.2l0.1 0.1M3.4 4.6l-0.4 -0.7M7.5 7.6l0.4 -0.6M6.2 11.8l0.5 0.8M6.6 10.4l-0.3 1.0M3.8 12.6l0.6 0.4M5.1 7.1l-0.0 0.8M6.6 7.5l-0.3 0.8M4.8 11.9l0.1 0.8M4.9 10.0l-0.6 -0.4M3.0 9.7l0.9 -0.5M4.2 12.0l1.0 0.4M5.1 7.5l0.3 0.2M3.9 5.4l0.0 0.9M2.6 8.9l0.7 0.5M3.8 12.0l0.5 -0.9M3.7 9.2l-0.6 0.8M5.1 3.2l0.8 -0.5M6.3 4.3l-0.2 0.4M4.7 2.4l-0.7 0.3" stroke="#929292" stroke-width="0.75" fill="none"/><path d="M5 9V14" stroke="#b0b0b0" stroke-width="0.4"/><path d="M4.2 0.5l0.6 0.6" stroke="#b4b4b4" stroke-width="0.5"/></g><g transform="translate(82.6,0)"><path d="M5.2 4.6l-0.3 0.2M2.6 8.9l-1.1 0.7M4.0 4.9l1.1 -0.1M4.9 11.2l0.3 -0.7M7.1 9.0l0.1 0.5M2.5 9.4l0.6 0.2M3.2 5.3l0.8 -0.1M7.3 9.9l0.5 0.8M6.3 6.3l-0.1 0.9M3.3 11.7l-0.8 -0.6M4.8 12.6l0.3 -0.4M4.4 7.6l-0.3 0.2M7.2 8.4l0.4 0.9M7.2 11.4l0.4 -0.7M7.1 11.5l0.9 0.1M3.3 9.9l0.7 0.1M3.4 5.1l0.8 1.0M5.8 3.0l-0.2 -0.7M6.0 5.2l0.8 -0.9M2.5 8.8l0.5 -0.3M7.1 11.7l0.0 1.0M3.4 5.4l0.2 -0.9M4.7 4.2l0.2 -0.7M5.9 2.5l-0.4 0.9M4.5 11.9l-0.1 0.0M5.5 9.1l0.1 0.2" stroke="#929292" stroke-width="0.75" fill="none"/><path d="M5 9V14" stroke="#b0b0b0" stroke-width="0.4"/><path d="M5.9 0.5l0.6 0.6" stroke="#b4b4b4" stroke-width="0.5"/></g><g transform="translate(146.9,0)"><path d="M3.6 4.6l-0.2 -0.7M4.7 2.7l0.9 0.6M3.4 10.4l0.1 -0.4M3.8 3.9l-0.6 0.9M6.5 11.1l0.7 -0.6M5.5 5.4l0.5 0.7M3.2 11.7l0.2 0.3M3.4 7.6l-0.1 -0.8M6.4 12.3l0.1 -0.4M5.3 12.0l0.8 0.7M4.6 7.6l0.2 -0.1M4.4 3.8l0.7 -0.9M5.3 2.5l-0.5 0.1M4.3 7.2l1.1 -0.6M3.7 6.5l0.3 -0.4M6.0 5.9l-0.4 0.1M3.4 11.9l-1.0 -0.5M5.6 10.4l-0.6 -0.3M4.9 4.0l-1.0 0.4M6.9 11.9l0.5 0.9M4.5 2.2l1.0 0.6M7.0 6.5l0.3 0.6M3.8 5.2l-0.1 -0.7M7.0 6.2l-0.4 -1.0M4.2 2.5l0.6 -0.3M3.5 5.2l1.1 -0.2" stroke="#929292" stroke-width="0.75" fill="none"/><path d="M5 9V14" stroke="#b0b0b0" stroke-width="0.4"/><path d="M4.4 0.5l0.6 0.6" stroke="#b4b4b4" stroke-width="0.5"/></g></svg>
<div class="a" style="left:215.2px;top:122.8px;width:29.7px;height:1.7px;background:#a3a5a8"></div>
</div>
<div class="a" style="left:549px;top:870px;width:398px;height:141px;background:#fff;border:1px solid #4a4744;overflow:hidden">
<div class="a" style="left:11.7px;top:7.6px;width:16.4px;height:1.2px;background:#9a9a9a"></div>
<div class="a" style="left:175.5px;top:7.6px;width:11.0px;height:1.2px;background:#9a9a9a"></div>
<div class="a" style="left:17.0px;top:19.1px;width:79.5px;height:45.4px;background:#d6d0c3;border:1px solid #7a7770;border-radius:6.5px"></div>
<div class="a" style="left:102.1px;top:19.1px;width:78.7px;height:45.4px;background:#d6d0c3;border:1px solid #7a7770;border-radius:6.5px"></div>
<div class="a" style="left:17.0px;top:67.1px;width:16.5px;height:1.7px;background:#a3a5a8"></div>
<div class="a" style="left:102.1px;top:67.1px;width:14.2px;height:1.7px;background:#a3a5a8"></div>
<div class="a" style="left:17.0px;top:73.3px;width:163.8px;height:45.5px;background:#fff;border:1px solid #7a7770;border-radius:6.5px;overflow:hidden"><div class="a" style="left:0;top:32.4px;width:170px;height:1.3px;background:#3d3a35"></div><div class="a" style="left:0;top:33.7px;width:170px;height:12px;background:#d6d0c3"></div></div>
<svg style="left:17.0px;top:88.9px" width="164" height="19" viewBox="0 0 164 19"><g transform="translate(5.3,0)"><path d="M6.0 3.5l0.6 -0.5M4.8 7.4l0.3 0.6M3.7 3.0l0.7 -0.1M2.2 10.4l-0.1 0.4M6.5 4.5l0.9 -0.9M5.1 2.3l1.0 -0.2M4.7 4.4l-1.0 -0.6M5.0 6.8l-0.6 -0.5M4.9 4.4l-0.5 -1.0M5.3 11.2l0.3 -0.6M6.1 12.9l-0.8 -0.3M6.3 9.9l1.0 -0.2M5.8 11.1l-0.4 0.2M6.5 11.7l0.0 0.2M4.4 2.4l0.7 -0.2M5.2 3.9l0.4 0.3M4.7 6.1l0.0 0.6M4.5 7.7l-0.0 -0.9M5.5 2.5l1.1 0.2M3.6 6.3l0.0 1.0M5.2 10.5l0.8 -0.5M7.2 7.7l0.2 -0.1M5.2 5.0l1.0 -1.0M6.7 10.6l0.8 0.5M5.1 10.9l0.1 -0.1M5.9 2.6l0.2 -0.6" stroke="#929292" stroke-width="0.75" fill="none"/><path d="M5 6V18" stroke="#9a9a9a" stroke-width="0.6"/><path d="M5.0 0.5l0.6 0.6" stroke="#b4b4b4" stroke-width="0.5"/></g><g transform="translate(70.8,0)"><path d="M6.6 12.5l-1.0 -0.8M6.1 11.2l0.4 -0.4M5.6 8.7l0.2 -0.7M4.5 6.7l0.5 1.0M5.2 12.4l-0.1 -0.5M3.9 2.4l-0.1 -0.4M6.7 6.2l0.1 0.1M3.4 4.6l-0.4 -0.7M7.5 7.6l0.4 -0.6M6.2 11.8l0.5 0.8M6.6 10.4l-0.3 1.0M3.8 12.6l0.6 0.4M5.1 7.1l-0.0 0.8M6.6 7.5l-0.3 0.8M4.8 11.9l0.1 0.8M4.9 10.0l-0.6 -0.4M3.0 9.7l0.9 -0.5M4.2 12.0l1.0 0.4M5.1 7.5l0.3 0.2M3.9 5.4l0.0 0.9M2.6 8.9l0.7 0.5M3.8 12.0l0.5 -0.9M3.7 9.2l-0.6 0.8M5.1 3.2l0.8 -0.5M6.3 4.3l-0.2 0.4M4.7 2.4l-0.7 0.3" stroke="#929292" stroke-width="0.75" fill="none"/><path d="M5 9V14" stroke="#b0b0b0" stroke-width="0.4"/><path d="M4.2 0.5l0.6 0.6" stroke="#b4b4b4" stroke-width="0.5"/></g><g transform="translate(82.6,0)"><path d="M5.2 4.6l-0.3 0.2M2.6 8.9l-1.1 0.7M4.0 4.9l1.1 -0.1M4.9 11.2l0.3 -0.7M7.1 9.0l0.1 0.5M2.5 9.4l0.6 0.2M3.2 5.3l0.8 -0.1M7.3 9.9l0.5 0.8M6.3 6.3l-0.1 0.9M3.3 11.7l-0.8 -0.6M4.8 12.6l0.3 -0.4M4.4 7.6l-0.3 0.2M7.2 8.4l0.4 0.9M7.2 11.4l0.4 -0.7M7.1 11.5l0.9 0.1M3.3 9.9l0.7 0.1M3.4 5.1l0.8 1.0M5.8 3.0l-0.2 -0.7M6.0 5.2l0.8 -0.9M2.5 8.8l0.5 -0.3M7.1 11.7l0.0 1.0M3.4 5.4l0.2 -0.9M4.7 4.2l0.2 -0.7M5.9 2.5l-0.4 0.9M4.5 11.9l-0.1 0.0M5.5 9.1l0.1 0.2" stroke="#929292" stroke-width="0.75" fill="none"/><path d="M5 9V14" stroke="#b0b0b0" stroke-width="0.4"/><path d="M5.9 0.5l0.6 0.6" stroke="#b4b4b4" stroke-width="0.5"/></g><g transform="translate(146.9,0)"><path d="M3.6 4.6l-0.2 -0.7M4.7 2.7l0.9 0.6M3.4 10.4l0.1 -0.4M3.8 3.9l-0.6 0.9M6.5 11.1l0.7 -0.6M5.5 5.4l0.5 0.7M3.2 11.7l0.2 0.3M3.4 7.6l-0.1 -0.8M6.4 12.3l0.1 -0.4M5.3 12.0l0.8 0.7M4.6 7.6l0.2 -0.1M4.4 3.8l0.7 -0.9M5.3 2.5l-0.5 0.1M4.3 7.2l1.1 -0.6M3.7 6.5l0.3 -0.4M6.0 5.9l-0.4 0.1M3.4 11.9l-1.0 -0.5M5.6 10.4l-0.6 -0.3M4.9 4.0l-1.0 0.4M6.9 11.9l0.5 0.9M4.5 2.2l1.0 0.6M7.0 6.5l0.3 0.6M3.8 5.2l-0.1 -0.7M7.0 6.2l-0.4 -1.0M4.2 2.5l0.6 -0.3M3.5 5.2l1.1 -0.2" stroke="#929292" stroke-width="0.75" fill="none"/><path d="M5 9V14" stroke="#b0b0b0" stroke-width="0.4"/><path d="M4.4 0.5l0.6 0.6" stroke="#b4b4b4" stroke-width="0.5"/></g></svg>
<div class="a" style="left:17.0px;top:122.8px;width:29.7px;height:1.7px;background:#a3a5a8"></div>
<div class="a" style="left:199.0px;top:0.0px;width:197.0px;height:139.0px;background:#d6d0c3"></div>
<div class="a" style="left:198.0px;top:0.0px;width:1.0px;height:139.0px;background:#4a4744"></div>
<div class="a" style="left:209.7px;top:6.9px;width:17.1px;height:1.2px;background:#a8a49a"></div>
<div class="a" style="left:373.8px;top:6.9px;width:11.4px;height:1.2px;background:#a8a49a"></div>
<div class="a" style="left:215.2px;top:19.1px;width:78.8px;height:44.9px;background:#4a4540;border-radius:6.5px"></div>
<div class="a" style="left:299.9px;top:19.1px;width:79.1px;height:44.9px;background:#4a4540;border-radius:6.5px"></div>
<div class="a" style="left:215.2px;top:72.9px;width:78.8px;height:47.1px;background:#4a4540;border-radius:6.5px"></div>
<div class="a" style="left:299.9px;top:72.9px;width:79.1px;height:47.1px;background:#4a4540;border-radius:6.5px"></div>
<div class="a" style="left:215.2px;top:66.6px;width:14.4px;height:1.7px;background:#aaa69d"></div>
<div class="a" style="left:215.2px;top:122.2px;width:14.4px;height:1.7px;background:#aaa69d"></div>
<div class="a" style="left:300.0px;top:66.6px;width:14.4px;height:1.7px;background:#aaa69d"></div>
<div class="a" style="left:300.0px;top:122.2px;width:14.4px;height:1.7px;background:#aaa69d"></div>
</div>
</div></div>
<!-- toolbar -->
<div class="a" style="left:14px;top:125px;width:40px;height:654px;background:#535353;border-right:1px solid #444;border-bottom:1px solid #444"></div>
<div class="a" style="left:14px;top:125px;width:40px;height:13px;background:#414141"></div>
<svg style="left:24px;top:128px" width="8" height="7" viewBox="0 0 8 7"><path d="M0 0L3.5 3.5L0 7ZM4.5 0L8 3.5L4.5 7Z" fill="#c8c8c8"/></svg>
<svg style="left:42px;top:128px" width="7" height="7" viewBox="0 0 7 7"><path d="M0.7 0.7L6.3 6.3M6.3 0.7L0.7 6.3" stroke="#c8c8c8" stroke-width="1.8"/></svg>
<div class="a" style="left:24px;top:141px;width:20px;height:4px;background:repeating-linear-gradient(to right,#3c3c3c 0 1px,transparent 1px 2px)"></div>
<div class="a" style="left:20px;top:153px;width:28px;height:22px;background:#2c2c2c;border-radius:3px"></div>
<svg style="left:28.5px;top:156.5px" width="14" height="17" viewBox="0 0 14 17"><path d="M1 1.2L12.4 10L6.2 10.8L1 16Z" stroke="#ececec" stroke-width="1.4" fill="none" stroke-linejoin="miter"/></svg>
<svg style="left:28.5px;top:181.5px" width="14" height="17" viewBox="0 0 14 17"><path d="M0.5 0.3L13 9.8L6.4 10.8L0.5 16.6Z" fill="#cfcfcf"/></svg>
<svg style="left:27.0px;top:204.0px" width="14" height="16" viewBox="0 0 14 16"><path d="M1 0.8H7.5L11 4.3V9M1 0.8V14.2H7" stroke="#cfcfcf" stroke-width="1.3" fill="none"/><path d="M7.2 1V4.6H11" stroke="#cfcfcf" stroke-width="1.1" fill="none"/><path d="M8.5 8.5L13.8 12L11 12.6L9.5 15.5Z" fill="#cfcfcf"/></svg>
<svg style="left:25.0px;top:229.0px" width="18" height="14" viewBox="0 0 18 14"><path d="M1 0V14M17 0V14" stroke="#cfcfcf" stroke-width="1.6"/><path d="M4 7H14" stroke="#cfcfcf" stroke-width="1.4"/><path d="M6.5 4L3.2 7L6.5 10M11.5 4L14.8 7L11.5 10" stroke="#cfcfcf" stroke-width="1.3" fill="none"/></svg>
<svg style="left:27.0px;top:253.0px" width="14" height="16" viewBox="0 0 14 16"><path d="M1 7V15H13V7" stroke="#cfcfcf" stroke-width="1.8" fill="none"/><path d="M1 14H13" stroke="#cfcfcf" stroke-width="2.4"/><rect x="4" y="9" width="2" height="2" fill="#cfcfcf"/><rect x="8" y="9" width="2" height="2" fill="#cfcfcf"/><path d="M3 0.8L8 5.5" stroke="#cfcfcf" stroke-width="1.5"/><path d="M9 2.8V6.8H5Z" fill="#cfcfcf"/></svg>
<svg style="left:44px;top:268px" width="3" height="3"><path d="M3 0V3H0Z" fill="#cfcfcf"/></svg>
<div class="a" style="left:16px;top:273px;width:36px;height:1px;background:#4d4d4d"></div>
<div class="t b" style="left:26px;top:277px;font-size:23px;color:#cfcfcf;font-family:'Liberation Serif',serif">T</div>
<svg style="left:44px;top:295px" width="3" height="3"><path d="M3 0V3H0Z" fill="#cfcfcf"/></svg>
<svg style="left:26.0px;top:304.0px" width="16" height="16" viewBox="0 0 16 16"><path d="M1 15L15 1" stroke="#cfcfcf" stroke-width="1.5"/></svg>
<svg style="left:23px;top:327px" width="22" height="17" viewBox="0 0 22 17"><path d="M0.5 4.2H7.5M4 0.8V7.6" stroke="#cfcfcf" stroke-width="1.9"/><path d="M14.5 0.8L20.8 5.6L18 9.3L14.6 14L5.5 16.2L8.8 8L11.8 4.3Z" fill="#cfcfcf"/><circle cx="12.6" cy="9.8" r="1.4" fill="#535353"/><path d="M6 15.8L11.8 10.6" stroke="#535353" stroke-width="1"/><path d="M12.6 3.4L18.8 8.2" stroke="#535353" stroke-width="1"/></svg>
<svg style="left:44px;top:343px" width="3" height="3"><path d="M3 0V3H0Z" fill="#cfcfcf"/></svg>
<svg style="left:25.5px;top:351.5px" width="17" height="17" viewBox="0 0 17 17"><path d="M12.5 0.8L16.2 4.5L5.8 14.9L1 16L2.1 11.2Z" fill="#cfcfcf"/><path d="M10.8 2.8L14.2 6.2" stroke="#535353" stroke-width="1"/><path d="M2.4 11.4L5.6 14.6" stroke="#535353" stroke-width="0.9"/></svg>
<svg style="left:44px;top:367px" width="3" height="3"><path d="M3 0V3H0Z" fill="#cfcfcf"/></svg>
<svg style="left:26px;top:376.5px" width="16" height="13" viewBox="0 0 16 13"><rect x="0.7" y="0.7" width="14.6" height="11.6" stroke="#cfcfcf" stroke-width="1.3" fill="none"/><path d="M1 1L15 12M15 1L1 12" stroke="#cfcfcf" stroke-width="1.1"/></svg>
<svg style="left:44px;top:391px" width="3" height="3"><path d="M3 0V3H0Z" fill="#cfcfcf"/></svg>
<svg style="left:26px;top:400.5px" width="16" height="13" viewBox="0 0 16 13"><rect x="0.7" y="0.7" width="14.6" height="11.6" stroke="#cfcfcf" stroke-width="1.3" fill="none"/></svg>
<svg style="left:44px;top:415px" width="3" height="3"><path d="M3 0V3H0Z" fill="#cfcfcf"/></svg>
<div class="a" style="left:16px;top:421px;width:36px;height:1px;background:#4d4d4d"></div>
<svg style="left:25.0px;top:426.0px" width="18" height="16" viewBox="0 0 18 16"><path d="M1 1.5L12.5 11.5M1 10.5L12 3" stroke="#cfcfcf" stroke-width="1.5"/><circle cx="14.5" cy="4" r="2.4" stroke="#cfcfcf" stroke-width="1.3" fill="none"/><circle cx="14" cy="12.8" r="2.4" stroke="#cfcfcf" stroke-width="1.3" fill="none"/></svg>
<svg style="left:24.5px;top:449.5px" width="21" height="17" viewBox="0 0 21 17"><path d="M0.5 0.5L10.5 7.2L5.6 8L0.5 12.6Z" fill="#cfcfcf"/><path d="M7 2.5H18.5V14.5H6.5V9" stroke="#cfcfcf" stroke-width="1" fill="none" stroke-dasharray="2 1.6"/><rect x="17" y="1" width="3" height="3" fill="#cfcfcf"/><rect x="17" y="13" width="3" height="3" fill="#cfcfcf"/><rect x="5" y="13" width="3" height="3" fill="#cfcfcf"/><rect x="11.5" y="13.3" width="2.4" height="2.4" fill="#cfcfcf"/><rect x="17.3" y="7.3" width="2.4" height="2.4" fill="#cfcfcf"/></svg>
<svg style="left:44px;top:465px" width="3" height="3"><path d="M3 0V3H0Z" fill="#cfcfcf"/></svg>
<div class="a" style="left:26px;top:475px;width:16px;height:14px;border:1px solid #cfcfcf;background:linear-gradient(to right,#2e2e2e,#dadada)"></div>
<svg style="left:26px;top:499px" width="16" height="14" viewBox="0 0 16 14"><rect x="0.5" y="0.5" width="15" height="13" fill="#bdbdbd" stroke="#cfcfcf"/><rect x="1" y="1" width="3" height="3" fill="#2a2a2a" opacity="1.00"/><rect x="7" y="1" width="3" height="3" fill="#2a2a2a" opacity="0.66"/><rect x="13" y="1" width="3" height="3" fill="#2a2a2a" opacity="0.32"/><rect x="4" y="4" width="3" height="3" fill="#2a2a2a" opacity="0.83"/><rect x="10" y="4" width="3" height="3" fill="#2a2a2a" opacity="0.49"/><rect x="1" y="7" width="3" height="3" fill="#2a2a2a" opacity="1.00"/><rect x="7" y="7" width="3" height="3" fill="#2a2a2a" opacity="0.66"/><rect x="13" y="7" width="3" height="3" fill="#2a2a2a" opacity="0.32"/><rect x="4" y="10" width="3" height="3" fill="#2a2a2a" opacity="0.83"/><rect x="10" y="10" width="3" height="3" fill="#2a2a2a" opacity="0.49"/></svg>
<div class="a" style="left:16px;top:519px;width:36px;height:1px;background:#4d4d4d"></div>
<svg style="left:26.5px;top:525.5px" width="15" height="15" viewBox="0 0 15 15"><path d="M0.5 0.5H14.5V10L10 14.5H0.5Z" fill="#cfcfcf"/><path d="M3 4H12M3 6.8H12M3 9.6H8" stroke="#535353" stroke-width="1.1"/><path d="M10 14.5V10H14.5" stroke="#535353" stroke-width="1" fill="none"/></svg>
<svg style="left:26.0px;top:548.5px" width="16" height="17" viewBox="0 0 16 17"><path d="M10.5 3.5L13.5 6.5L5 15L1.5 15.8L2.2 12Z" stroke="#cfcfcf" stroke-width="1.2" fill="none"/><path d="M9 2.5L14.5 8L15.8 3.8Q16 0.5 12.8 1Z" fill="#cfcfcf"/></svg>
<svg style="left:44px;top:564px" width="3" height="3"><path d="M3 0V3H0Z" fill="#cfcfcf"/></svg>
<svg style="left:25.5px;top:572.5px" width="17" height="17" viewBox="0 0 17 17"><path d="M3.6 9.5L2.2 4.2Q2 3 3 2.8T4.4 3.6L5.6 7.5L5.3 1.8Q5.3 0.6 6.4 0.6T7.6 1.7L8.2 7L9.4 1.6Q9.7 0.5 10.7 0.8T11.6 2.2L10.9 7.6L13 3.6Q13.6 2.6 14.5 3.1T14.9 4.6L13 10Q12.8 16.4 8.2 16.4Q5.4 16.4 3.8 13.6L0.8 10.4Q0.2 9.4 1.1 8.8T2.8 9Z" fill="#cfcfcf"/></svg>
<svg style="left:26.0px;top:597.0px" width="16" height="16" viewBox="0 0 16 16"><circle cx="6.2" cy="6.2" r="5" stroke="#cfcfcf" stroke-width="1.4" fill="none"/><path d="M10 10L15 15" stroke="#cfcfcf" stroke-width="2.2"/></svg>
<div class="a" style="left:16px;top:618px;width:36px;height:1px;background:#4d4d4d"></div>
<svg style="left:21px;top:623px" width="10" height="10" viewBox="0 0 10 10"><rect x="3" y="3" width="6.5" height="6.5" fill="#111" stroke="#fff" stroke-width="1"/><rect x="0.5" y="0.5" width="6" height="6" fill="#fff" stroke="#111" stroke-width="1"/><path d="M1 6L6 1" stroke="#d71a1a" stroke-width="1"/></svg>
<svg style="left:38px;top:624px" width="10" height="10" viewBox="0 0 10 10"><path d="M2.5 3.5Q7 3 7.5 8" stroke="#cfcfcf" stroke-width="1.5" fill="none"/><path d="M0 4L4 0.5V6.5Z" fill="#cfcfcf"/><path d="M5 7L10 7L7.5 10Z" fill="#cfcfcf"/></svg>
<div class="a" style="left:29px;top:648px;width:19px;height:20px;background:#fff;border:1px solid #2a2a2a;overflow:hidden"><div class="a" style="left:4px;top:4px;width:9px;height:10px;background:#4a4a4a"></div><svg style="left:0;top:0" width="17" height="18"><path d="M0 18L17 0" stroke="#d71a1a" stroke-width="2"/></svg></div>
<div class="a" style="left:20px;top:639px;width:20px;height:20px;background:#fff;border:1px solid #2a2a2a;overflow:hidden"><svg style="left:0;top:0" width="18" height="18"><path d="M0 18L18 0" stroke="#d71a1a" stroke-width="2"/></svg></div>
<div class="a" style="left:21px;top:676px;width:12px;height:12px;background:#2f2f2f;border-radius:2px"></div><div class="a" style="left:24px;top:679px;width:7px;height:7px;border:1px solid #d4d4d4"></div>
<div class="t b" style="left:39px;top:676px;font-size:12px;color:#cfcfcf;font-family:'Liberation Serif',serif">T</div>
<div class="a" style="left:20px;top:695px;width:28px;height:23px;background:#2f2f2f;border-radius:3px"></div>
<div class="a" style="left:26px;top:699px;width:16px;height:14px;background:#fff;overflow:hidden"><svg style="left:0;top:0" width="16" height="14"><path d="M0.5 13.5L15.5 0.5" stroke="#d71a1a" stroke-width="1.8"/></svg></div>
<svg style="left:43px;top:713px" width="3" height="3"><path d="M3 0V3H0Z" fill="#cfcfcf"/></svg>
<div class="a" style="left:16px;top:724px;width:36px;height:1px;background:#4d4d4d"></div>
<svg style="left:28px;top:729px" width="14" height="11" viewBox="0 0 14 11"><rect x="2" y="3" width="11" height="7.5" fill="#9a9a9a"/><path d="M3 1H13M0.5 4V10" stroke="#cfcfcf" stroke-width="1" stroke-dasharray="1.5 1.5"/></svg>
<div class="a" style="left:16px;top:745px;width:36px;height:1px;background:#4d4d4d"></div>
<div class="a" style="left:20px;top:750px;width:28px;height:23px;background:#2f2f2f;border-radius:3px"></div>
<svg style="left:28px;top:756px" width="13" height="11" viewBox="0 0 13 11"><rect x="0.6" y="0.6" width="11.8" height="9.8" fill="#5a5a5a" stroke="#dcdcdc" stroke-width="1.2"/><rect x="0.6" y="0.6" width="11.8" height="2.4" fill="#dcdcdc"/></svg>
<svg style="left:43px;top:768px" width="3" height="3"><path d="M3 0V3H0Z" fill="#cfcfcf"/></svg>
<!-- dock: collapsed column -->
<svg style="left:1655px;top:99px" width="7" height="6" viewBox="0 0 7 6"><path d="M3 0L0 3L3 6ZM7 0L4 3L7 6Z" fill="#c4c4c4"/></svg>
<svg style="left:1902px;top:99px" width="7" height="6" viewBox="0 0 7 6"><path d="M0 0L3 3L0 6ZM4 0L7 3L4 6Z" fill="#c4c4c4"/></svg>
<div class="a" style="left:1501px;top:148px;width:167px;height:1px;background:#3c3c3c"></div>
<div class="a" style="left:1575px;top:111px;width:20px;height:4px;background:repeating-linear-gradient(to right,#3c3c3c 0 1px,transparent 1px 2px)"></div>
<div class="t b" style="left:1538px;top:126px;font-size:12px;color:#e8e8e8;letter-spacing:-0.3px">Index</div>
<div class="a" style="left:1501px;top:189px;width:167px;height:1px;background:#3c3c3c"></div>
<div class="a" style="left:1575px;top:152px;width:20px;height:4px;background:repeating-linear-gradient(to right,#3c3c3c 0 1px,transparent 1px 2px)"></div>
<div class="t b" style="left:1538px;top:167px;font-size:12px;color:#e8e8e8;letter-spacing:-0.44px">Conditional Text</div>
<div class="a" style="left:1501px;top:230px;width:167px;height:1px;background:#3c3c3c"></div>
<div class="a" style="left:1575px;top:193px;width:20px;height:4px;background:repeating-linear-gradient(to right,#3c3c3c 0 1px,transparent 1px 2px)"></div>
<div class="t b" style="left:1538px;top:208px;font-size:12px;color:#e8e8e8;letter-spacing:-0.65px">Hyperlinks</div>
<div class="a" style="left:1501px;top:271px;width:167px;height:1px;background:#3c3c3c"></div>
<div class="a" style="left:1575px;top:234px;width:20px;height:4px;background:repeating-linear-gradient(to right,#3c3c3c 0 1px,transparent 1px 2px)"></div>
<div class="t b" style="left:1538px;top:249px;font-size:12px;color:#e8e8e8;letter-spacing:-0.8px">Bookmarks</div>
<svg style="left:1513px;top:124.5px" width="16" height="15" viewBox="0 0 16 15"><path d="M0 1H8M4 3.8H16M4 6.5H16M0 9.2H8M4 12H16M4 14.5H16" stroke="#cfcfcf" stroke-width="1.3"/></svg>
<svg style="left:1513.5px;top:164.5px" width="14" height="12" viewBox="0 0 14 12"><path d="M0 0H14V4.2H12.2V2.6H8.8V9.6H10.6V12H3.4V9.6H5.2V2.6H1.8V4.2H0Z" fill="#cfcfcf"/></svg>
<svg style="left:1513.5px;top:178.5px" width="14" height="4" viewBox="0 0 14 4"><path d="M0 1.5Q1.7 3.5 3.5 1.5T7 1.5T10.5 1.5T14 1.5" stroke="#cfcfcf" stroke-width="1.3" fill="none"/></svg>
<svg style="left:1511px;top:205px" width="19" height="18" viewBox="0 0 19 18"><circle cx="7.5" cy="7.5" r="6.6" fill="#cfcfcf"/><path d="M4 2.5Q6.5 4 5 6.5T5.5 10.5M9 1.5Q8 4 10 5.5T13.5 5" stroke="#535353" stroke-width="1.1" fill="none"/><path d="M10 8.5V14L8.8 13Q8 12.6 7.8 13.6L10.5 17.5H16Q17.5 15 17 12.2Q16.8 11 15.6 11.3V11Q15 10 14 10.6Q13.4 9.6 12.3 10.3V8.5Q11.2 7 10 8.5Z" fill="#cfcfcf" stroke="#535353" stroke-width="0.8"/></svg>
<svg style="left:1516px;top:246.5px" width="9.5" height="17" viewBox="0 0 9.5 17"><path d="M0 0H9.5V17L4.75 12.5L0 17Z" fill="#cfcfcf"/></svg>
<!-- Pages panel -->
<div class="a" style="left:1671px;top:108px;width:244px;height:27px;background:#424242"></div>
<div class="a" style="left:1671px;top:108px;width:61px;height:27px;background:#535353"></div>
<svg style="left:1678px;top:117px" width="6" height="10" viewBox="0 0 6 10"><path d="M0.7 3.6L3 1L5.3 3.6M0.7 6.4L3 9L5.3 6.4" stroke="#c8c8c8" stroke-width="1" fill="none"/></svg>
<div class="t b" style="left:1689px;top:117px;font-size:12px;color:#ececec;letter-spacing:-0.97px">Pages</div>
<div class="a" style="left:1732px;top:108px;width:57px;height:26px;background:#494949"></div>
<div class="t b" style="left:1744px;top:117px;font-size:12px;color:#a4a4a4;letter-spacing:-0.95px">Layers</div>
<div class="a" style="left:1790px;top:108px;width:51px;height:26px;background:#494949"></div>
<div class="t b" style="left:1802px;top:117px;font-size:12px;color:#a4a4a4;letter-spacing:-0.93px">Links</div>
<svg style="left:1899.5px;top:118px" width="11" height="8" viewBox="0 0 11 8"><path d="M0 0.5H11M0 2.8H11M0 5.1H11M0 7.4H11" stroke="#c4c4c4" stroke-width="1"/></svg>
<div class="a" style="left:1671px;top:135px;width:244px;height:5px;background:#4c4c4c"></div>
<div class="a" style="left:1676px;top:151px;width:4px;height:10px;background:#8a8a8a"></div>
<div class="t b" style="left:1715px;top:152px;font-size:11.5px;color:#e8e8e8;letter-spacing:-0.34px">Letter H</div>
<svg style="left:1793px;top:155px" width="7" height="4"><path d="M0 0H7L3.5 4Z" fill="#c4c4c4"/></svg>
<div class="a" style="left:1805px;top:143px;width:1px;height:25px;background:#646464"></div>
<div class="a" style="left:1671px;top:172px;width:244px;height:1px;background:#484848"></div>
<!-- pages list -->
<div class="a" style="left:1671px;top:173px;width:233px;height:533px;overflow:hidden"><div class="a" style="left:0;top:0.7px;width:233px;height:540px">
<div class="a" style="left:67.5px;top:8.0px;width:52.0px;height:36.0px;background:#d6d0c3;border:1px solid #8a8a8a"></div>
<div class="a" style="left:95.5px;top:16.0px;width:16.0px;height:28.0px;background:#79756a;border-radius:3px 0 0 0"></div>
<div class="a" style="left:103.5px;top:8.0px;width:15.5px;height:20.0px;background:#403d37;border-radius:0 0 0 3px"></div>
<div class="a" style="left:73.0px;top:33.0px;width:8.0px;height:1.0px;background:#f0ede6"></div>
<div class="a" style="left:80.0px;top:35.5px;width:27.0px;height:2.0px;background:#f5f3ee;opacity:0.9"></div>
<div class="a" style="left:79.5px;top:20.0px;width:2.0px;height:1.0px;background:#35b5d8"></div>
<div class="a" style="left:67.0px;top:2.0px;width:1.0px;height:46.0px;background:#a8a8a8"></div>
<svg style="left:87px;top:2px" width="11" height="5"><path d="M0 0H11L5.5 5Z" fill="#d8d8d8"/></svg>
<div class="t b" style="left:88px;top:51px;font-size:10.5px;color:#e8e8e8">1</div>
<div class="a" style="left:67.0px;top:66.0px;width:1.0px;height:46.0px;background:#a8a8a8"></div>
<div class="a" style="left:16.5px;top:72.0px;width:102.5px;height:35.5px;background:#a9cbf3;border:1px solid #7fa6d6"></div>
<div class="a" style="left:17.5px;top:73.0px;width:27.0px;height:23.0px;background:#3f6fa5;border-radius:0 0 4px 0"></div>
<div class="a" style="left:43.5px;top:73.0px;width:24.2px;height:33.5px;background:#86b3e6"></div>
<div class="a" style="left:17.5px;top:96.0px;width:27.0px;height:10.5px;background:#86b3e6"></div>
<div class="a" style="left:20.5px;top:77.0px;width:8.0px;height:1.0px;background:#9fc1ea"></div>
<div class="a" style="left:20.5px;top:79.5px;width:10.0px;height:1.0px;background:#9fc1ea"></div>
<div class="a" style="left:20.5px;top:82.0px;width:12.0px;height:1.0px;background:#9fc1ea"></div>
<div class="a" style="left:20.5px;top:88.0px;width:20.0px;height:5.0px;background:#8fb6e4"></div>
<div class="a" style="left:47.5px;top:76.0px;width:5.0px;height:1.4px;background:#4f7eb3"></div>
<div class="a" style="left:47.5px;top:78.6px;width:8.0px;height:1.4px;background:#4f7eb3"></div>
<div class="a" style="left:47.5px;top:81.2px;width:5.0px;height:1.4px;background:#4f7eb3"></div>
<div class="a" style="left:47.5px;top:83.8px;width:8.0px;height:1.4px;background:#4f7eb3"></div>
<div class="a" style="left:47.5px;top:86.4px;width:5.0px;height:1.4px;background:#4f7eb3"></div>
<div class="a" style="left:47.5px;top:89.0px;width:8.0px;height:1.4px;background:#4f7eb3"></div>
<div class="a" style="left:47.5px;top:91.6px;width:5.0px;height:1.4px;background:#4f7eb3"></div>
<div class="a" style="left:47.5px;top:94.2px;width:8.0px;height:1.4px;background:#4f7eb3"></div>
<div class="a" style="left:47.5px;top:96.8px;width:5.0px;height:1.4px;background:#4f7eb3"></div>
<div class="a" style="left:19.5px;top:99.0px;width:6.0px;height:1.0px;background:#4f7eb3"></div>
<div class="a" style="left:19.5px;top:101.0px;width:5.0px;height:4.0px;background:repeating-linear-gradient(to bottom,#5a88bb 0 1px,transparent 1px 2px)"></div>
<div class="a" style="left:27.5px;top:99.0px;width:6.0px;height:1.0px;background:#4f7eb3"></div>
<div class="a" style="left:27.5px;top:101.0px;width:5.0px;height:4.0px;background:repeating-linear-gradient(to bottom,#5a88bb 0 1px,transparent 1px 2px)"></div>
<div class="a" style="left:35.5px;top:99.0px;width:6.0px;height:1.0px;background:#4f7eb3"></div>
<div class="a" style="left:35.5px;top:101.0px;width:5.0px;height:4.0px;background:repeating-linear-gradient(to bottom,#5a88bb 0 1px,transparent 1px 2px)"></div>
<div class="a" style="left:43.5px;top:99.0px;width:6.0px;height:1.0px;background:#4f7eb3"></div>
<div class="a" style="left:43.5px;top:101.0px;width:5.0px;height:4.0px;background:repeating-linear-gradient(to bottom,#5a88bb 0 1px,transparent 1px 2px)"></div>
<div class="a" style="left:70.5px;top:76.0px;width:16.0px;height:12.0px;background:#8fb8e8;border:1px solid #6f9acb;border-radius:3.5px"></div>
<div class="a" style="left:88.5px;top:77.0px;width:13.0px;height:9.0px;background:#8fb8e8;border:1px solid #6f9acb;border-radius:3.5px"></div>
<div class="a" style="left:103.5px;top:76.0px;width:13.0px;height:11.0px;background:#8fb8e8;border:1px solid #6f9acb;border-radius:3.5px"></div>
<div class="a" style="left:82.5px;top:91.0px;width:13.0px;height:11.0px;background:#8fb8e8;border:1px solid #6f9acb;border-radius:3.5px"></div>
<div class="a" style="left:99.5px;top:92.0px;width:13.0px;height:9.0px;background:#8fb8e8;border:1px solid #6f9acb;border-radius:3.5px"></div>
<div class="a" style="left:70.5px;top:89.5px;width:4.0px;height:1.5px;background:#5a88bb"></div>
<div class="a" style="left:88.5px;top:87.5px;width:4.0px;height:1.5px;background:#5a88bb"></div>
<div class="a" style="left:103.5px;top:88.5px;width:4.0px;height:1.5px;background:#5a88bb"></div>
<div class="a" style="left:82.5px;top:103.0px;width:4.0px;height:1.5px;background:#5a88bb"></div>
<div class="a" style="left:99.5px;top:102.0px;width:4.0px;height:1.5px;background:#5a88bb"></div>
<div class="a" style="left:70.5px;top:100.0px;width:9.0px;height:3.5px;background:#3f6fa5"></div>
<div class="a" style="left:67.0px;top:72.0px;width:1.0px;height:36.0px;background:#c7dcf5"></div>
<div class="a" style="left:54.0px;top:113.0px;width:23.0px;height:14.0px;background:#1473e6"></div>
<div class="t b" style="left:54px;top:114.5px;width:23px;text-align:center;font-size:10.5px;color:#fff">2-3</div>
<div class="a" style="left:67.0px;top:130.0px;width:1.0px;height:46.0px;background:#a8a8a8"></div>
<div class="a" style="left:16.5px;top:136.0px;width:51.2px;height:35.5px;background:#403d37"></div>
<div class="a" style="left:67.8px;top:136.0px;width:51.2px;height:35.5px;background:#cbc5b7"></div>
<div class="a" style="left:37.5px;top:145.0px;width:21.0px;height:6.0px;background:#7e7a74"></div>
<div class="a" style="left:37.5px;top:154.0px;width:5.0px;height:1.2px;background:#7e7a74"></div>
<div class="a" style="left:37.5px;top:156.5px;width:8.0px;height:1.2px;background:#7e7a74"></div>
<div class="a" style="left:37.5px;top:159.0px;width:6.0px;height:1.2px;background:#7e7a74"></div>
<div class="a" style="left:37.5px;top:161.5px;width:11.0px;height:1.2px;background:#7e7a74"></div>
<div class="a" style="left:37.5px;top:164.0px;width:7.0px;height:1.2px;background:#7e7a74"></div>
<div class="a" style="left:16.5px;top:136.0px;width:8.0px;height:8.5px;background:#fff"></div>
<div class="t" style="left:17.5px;top:136.5px;font-size:8.5px;color:#000">A</div>
<div class="a" style="left:110.0px;top:136.0px;width:8.0px;height:8.5px;background:#fff"></div>
<div class="t" style="left:111.0px;top:136.5px;font-size:8.5px;color:#000">A</div>
<div class="t" style="left:17.5px;top:158.0px;font-size:15px;color:#807b73;letter-spacing:-0.5px">O1</div>
<div class="t" style="left:35px;top:179px;width:60px;text-align:center;font-size:10.5px;color:#e6e6e6">4-5</div>
<div class="a" style="left:67.0px;top:194.0px;width:1.0px;height:46.0px;background:#a8a8a8"></div>
<div class="a" style="left:16.5px;top:200.0px;width:102.5px;height:35.5px;background:#fff;border:1px solid #8a8a8a"></div>
<div class="a" style="left:27.5px;top:206.0px;width:13.0px;height:4.0px;background:repeating-linear-gradient(to bottom,#a5a7aa 0 1px,transparent 1px 1.5px)"></div>
<div class="a" style="left:43.5px;top:204.5px;width:20.0px;height:8.5px;background:#35a7cf;border-radius:2.5px"></div>
<div class="a" style="left:45.0px;top:206.0px;width:8.0px;height:5.5px;background:#cfeaf5;border:1px solid #1d87ad"></div>
<div class="a" style="left:54.0px;top:206.0px;width:8.0px;height:5.5px;background:#cfeaf5;border:1px solid #1d87ad"></div>
<div class="a" style="left:21.0px;top:216.0px;width:19.5px;height:14.5px;background:#d6d0c3;border:1px solid #7a7770;border-radius:2.5px"></div>
<div class="a" style="left:43.0px;top:216.0px;width:20.0px;height:14.5px;background:#d6d0c3;border:1px solid #7a7770;border-radius:2.5px"></div>
<div class="a" style="left:21.0px;top:232.0px;width:5.0px;height:1.0px;background:#999"></div>
<div class="a" style="left:43.0px;top:232.0px;width:4.0px;height:1.0px;background:#999"></div>
<div class="a" style="left:72.0px;top:204.5px;width:21.0px;height:12.0px;background:#35a7cf;border-radius:3px"></div>
<div class="a" style="left:74.0px;top:206.5px;width:17.0px;height:8.0px;background:#cfeaf5;border:1px solid #1d87ad"></div>
<div class="a" style="left:95.0px;top:205.0px;width:19.5px;height:11.5px;background:#d6d0c3;border:1px solid #7a7770;border-radius:2.5px"></div>
<div class="a" style="left:72.0px;top:219.0px;width:42.5px;height:11.5px;background:#fff;border:1px solid #7a7770;border-radius:2.5px"></div>
<div class="a" style="left:73.0px;top:227.0px;width:40.5px;height:1.0px;background:#3d3a35"></div>
<div class="a" style="left:73.0px;top:228.0px;width:40.5px;height:1.5px;background:#d6d0c3"></div>
<div class="a" style="left:72.0px;top:232.0px;width:8.0px;height:1.0px;background:#999"></div>
<div class="a" style="left:16.5px;top:200.0px;width:8.0px;height:8.5px;background:#fff"></div>
<div class="t" style="left:17.5px;top:200.5px;font-size:8.5px;color:#000">A</div>
<div class="a" style="left:110.0px;top:200.0px;width:8.0px;height:8.5px;background:#fff"></div>
<div class="t" style="left:111.0px;top:200.5px;font-size:8.5px;color:#000">A</div>
<div class="t" style="left:35px;top:243px;width:60px;text-align:center;font-size:10.5px;color:#e6e6e6">6-7</div>
<div class="a" style="left:67.0px;top:258.0px;width:1.0px;height:46.0px;background:#a8a8a8"></div>
<div class="a" style="left:16.5px;top:264.0px;width:51.2px;height:35.5px;background:#fff;border:1px solid #8a8a8a;border-right:0"></div>
<div class="a" style="left:67.8px;top:264.0px;width:51.2px;height:35.5px;background:#d6d0c3"></div>
<div class="a" style="left:21.0px;top:269.0px;width:19.5px;height:11.5px;background:#d6d0c3;border:1px solid #7a7770;border-radius:2.5px"></div>
<div class="a" style="left:43.0px;top:269.0px;width:20.0px;height:11.5px;background:#d6d0c3;border:1px solid #7a7770;border-radius:2.5px"></div>
<div class="a" style="left:21.0px;top:283.0px;width:42.0px;height:11.5px;background:#fff;border:1px solid #7a7770;border-radius:2.5px"></div>
<div class="a" style="left:22.0px;top:291.0px;width:40.0px;height:1.0px;background:#3d3a35"></div>
<div class="a" style="left:22.0px;top:292.0px;width:40.0px;height:1.5px;background:#d6d0c3"></div>
<div class="a" style="left:21.0px;top:296.0px;width:8.0px;height:1.0px;background:#999"></div>
<div class="a" style="left:72.0px;top:268.5px;width:20.0px;height:12.0px;background:#4a4540;border-radius:2.5px"></div>
<div class="a" style="left:94.0px;top:268.5px;width:20.0px;height:12.0px;background:#4a4540;border-radius:2.5px"></div>
<div class="a" style="left:72.0px;top:282.5px;width:20.0px;height:12.0px;background:#4a4540;border-radius:2.5px"></div>
<div class="a" style="left:94.0px;top:282.5px;width:20.0px;height:12.0px;background:#4a4540;border-radius:2.5px"></div>
<div class="a" style="left:16.5px;top:264.0px;width:8.0px;height:8.5px;background:#fff"></div>
<div class="t" style="left:17.5px;top:264.5px;font-size:8.5px;color:#000">A</div>
<div class="a" style="left:110.0px;top:264.0px;width:8.0px;height:8.5px;background:#fff"></div>
<div class="t" style="left:111.0px;top:264.5px;font-size:8.5px;color:#000">A</div>
<div class="t" style="left:35px;top:307px;width:60px;text-align:center;font-size:10.5px;color:#e6e6e6">8-9</div>
<div class="a" style="left:67.0px;top:322.0px;width:1.0px;height:46.0px;background:#a8a8a8"></div>
<div class="a" style="left:16.5px;top:328.0px;width:51.2px;height:35.5px;background:#403d37"></div>
<div class="a" style="left:67.8px;top:328.0px;width:51.2px;height:35.5px;background:#cbc5b7"></div>
<div class="a" style="left:37.5px;top:337.0px;width:21.0px;height:6.0px;background:#7e7a74"></div>
<div class="a" style="left:37.5px;top:346.0px;width:5.0px;height:1.2px;background:#7e7a74"></div>
<div class="a" style="left:37.5px;top:348.5px;width:8.0px;height:1.2px;background:#7e7a74"></div>
<div class="a" style="left:37.5px;top:351.0px;width:6.0px;height:1.2px;background:#7e7a74"></div>
<div class="a" style="left:37.5px;top:353.5px;width:11.0px;height:1.2px;background:#7e7a74"></div>
<div class="a" style="left:37.5px;top:356.0px;width:7.0px;height:1.2px;background:#7e7a74"></div>
<div class="a" style="left:16.5px;top:328.0px;width:8.0px;height:8.5px;background:#fff"></div>
<div class="t" style="left:17.5px;top:328.5px;font-size:8.5px;color:#000">A</div>
<div class="a" style="left:110.0px;top:328.0px;width:8.0px;height:8.5px;background:#fff"></div>
<div class="t" style="left:111.0px;top:328.5px;font-size:8.5px;color:#000">A</div>
<div class="t" style="left:17.5px;top:350.0px;font-size:15px;color:#807b73;letter-spacing:-0.5px">O2</div>
<div class="t" style="left:35px;top:371px;width:60px;text-align:center;font-size:10.5px;color:#e6e6e6">10-11</div>
<div class="a" style="left:67.0px;top:386.0px;width:1.0px;height:46.0px;background:#a8a8a8"></div>
<div class="a" style="left:16.5px;top:392.0px;width:102.5px;height:35.5px;background:#fff;border:1px solid #8a8a8a"></div>
<div class="a" style="left:27.5px;top:398.0px;width:13.0px;height:4.0px;background:repeating-linear-gradient(to bottom,#a5a7aa 0 1px,transparent 1px 1.5px)"></div>
<div class="a" style="left:43.5px;top:396.5px;width:20.0px;height:8.5px;background:#35a7cf;border-radius:2.5px"></div>
<div class="a" style="left:45.0px;top:398.0px;width:8.0px;height:5.5px;background:#cfeaf5;border:1px solid #1d87ad"></div>
<div class="a" style="left:54.0px;top:398.0px;width:8.0px;height:5.5px;background:#cfeaf5;border:1px solid #1d87ad"></div>
<div class="a" style="left:21.0px;top:408.0px;width:19.5px;height:14.5px;background:#d6d0c3;border:1px solid #7a7770;border-radius:2.5px"></div>
<div class="a" style="left:43.0px;top:408.0px;width:20.0px;height:14.5px;background:#d6d0c3;border:1px solid #7a7770;border-radius:2.5px"></div>
<div class="a" style="left:21.0px;top:424.0px;width:5.0px;height:1.0px;background:#999"></div>
<div class="a" style="left:43.0px;top:424.0px;width:4.0px;height:1.0px;background:#999"></div>
<div class="a" style="left:72.0px;top:396.5px;width:21.0px;height:12.0px;background:#35a7cf;border-radius:3px"></div>
<div class="a" style="left:74.0px;top:398.5px;width:17.0px;height:8.0px;background:#cfeaf5;border:1px solid #1d87ad"></div>
<div class="a" style="left:95.0px;top:397.0px;width:19.5px;height:11.5px;background:#d6d0c3;border:1px solid #7a7770;border-radius:2.5px"></div>
<div class="a" style="left:72.0px;top:411.0px;width:42.5px;height:11.5px;background:#fff;border:1px solid #7a7770;border-radius:2.5px"></div>
<div class="a" style="left:73.0px;top:419.0px;width:40.5px;height:1.0px;background:#3d3a35"></div>
<div class="a" style="left:73.0px;top:420.0px;width:40.5px;height:1.5px;background:#d6d0c3"></div>
<div class="a" style="left:72.0px;top:424.0px;width:8.0px;height:1.0px;background:#999"></div>
<div class="a" style="left:16.5px;top:392.0px;width:8.0px;height:8.5px;background:#fff"></div>
<div class="t" style="left:17.5px;top:392.5px;font-size:8.5px;color:#000">A</div>
<div class="a" style="left:110.0px;top:392.0px;width:8.0px;height:8.5px;background:#fff"></div>
<div class="t" style="left:111.0px;top:392.5px;font-size:8.5px;color:#000">A</div>
<div class="t" style="left:35px;top:435px;width:60px;text-align:center;font-size:10.5px;color:#e6e6e6">12-13</div>
<div class="a" style="left:67.0px;top:450.0px;width:1.0px;height:46.0px;background:#a8a8a8"></div>
<div class="a" style="left:16.5px;top:456.0px;width:51.2px;height:35.5px;background:#fff;border:1px solid #8a8a8a;border-right:0"></div>
<div class="a" style="left:67.8px;top:456.0px;width:51.2px;height:35.5px;background:#d6d0c3"></div>
<div class="a" style="left:21.0px;top:461.0px;width:19.5px;height:11.5px;background:#d6d0c3;border:1px solid #7a7770;border-radius:2.5px"></div>
<div class="a" style="left:43.0px;top:461.0px;width:20.0px;height:11.5px;background:#d6d0c3;border:1px solid #7a7770;border-radius:2.5px"></div>
<div class="a" style="left:21.0px;top:475.0px;width:42.0px;height:11.5px;background:#fff;border:1px solid #7a7770;border-radius:2.5px"></div>
<div class="a" style="left:22.0px;top:483.0px;width:40.0px;height:1.0px;background:#3d3a35"></div>
<div class="a" style="left:22.0px;top:484.0px;width:40.0px;height:1.5px;background:#d6d0c3"></div>
<div class="a" style="left:21.0px;top:488.0px;width:8.0px;height:1.0px;background:#999"></div>
<div class="a" style="left:72.0px;top:460.5px;width:20.0px;height:12.0px;background:#4a4540;border-radius:2.5px"></div>
<div class="a" style="left:94.0px;top:460.5px;width:20.0px;height:12.0px;background:#4a4540;border-radius:2.5px"></div>
<div class="a" style="left:72.0px;top:474.5px;width:20.0px;height:12.0px;background:#4a4540;border-radius:2.5px"></div>
<div class="a" style="left:94.0px;top:474.5px;width:20.0px;height:12.0px;background:#4a4540;border-radius:2.5px"></div>
<div class="a" style="left:16.5px;top:456.0px;width:8.0px;height:8.5px;background:#fff"></div>
<div class="t" style="left:17.5px;top:456.5px;font-size:8.5px;color:#000">A</div>
<div class="a" style="left:110.0px;top:456.0px;width:8.0px;height:8.5px;background:#fff"></div>
<div class="t" style="left:111.0px;top:456.5px;font-size:8.5px;color:#000">A</div>
<div class="t" style="left:35px;top:499px;width:60px;text-align:center;font-size:10.5px;color:#e6e6e6">14-15</div>
<div class="a" style="left:67.0px;top:514.0px;width:1.0px;height:46.0px;background:#a8a8a8"></div>
<div class="a" style="left:16.5px;top:520.0px;width:51.2px;height:35.5px;background:#403d37"></div>
<div class="a" style="left:67.8px;top:520.0px;width:51.2px;height:35.5px;background:#cbc5b7"></div>
<div class="a" style="left:37.5px;top:529.0px;width:21.0px;height:6.0px;background:#7e7a74"></div>
<div class="a" style="left:37.5px;top:538.0px;width:5.0px;height:1.2px;background:#7e7a74"></div>
<div class="a" style="left:37.5px;top:540.5px;width:8.0px;height:1.2px;background:#7e7a74"></div>
<div class="a" style="left:37.5px;top:543.0px;width:6.0px;height:1.2px;background:#7e7a74"></div>
<div class="a" style="left:37.5px;top:545.5px;width:11.0px;height:1.2px;background:#7e7a74"></div>
<div class="a" style="left:37.5px;top:548.0px;width:7.0px;height:1.2px;background:#7e7a74"></div>
<div class="a" style="left:16.5px;top:520.0px;width:8.0px;height:8.5px;background:#fff"></div>
<div class="t" style="left:17.5px;top:520.5px;font-size:8.5px;color:#000">A</div>
<div class="a" style="left:110.0px;top:520.0px;width:8.0px;height:8.5px;background:#fff"></div>
<div class="t" style="left:111.0px;top:520.5px;font-size:8.5px;color:#000">A</div>
<svg style="left:45.0px;top:206.0px" width="8" height="5.5" viewBox="0 0 8 5.5"><path d="M0.5 0.5L7.5 5.0M7.5 0.5L0.5 5.0" stroke="#1d87ad" stroke-width="0.8"/></svg>
<svg style="left:54.0px;top:206.0px" width="8" height="5.5" viewBox="0 0 8 5.5"><path d="M0.5 0.5L7.5 5.0M7.5 0.5L0.5 5.0" stroke="#1d87ad" stroke-width="0.8"/></svg>
<svg style="left:74.0px;top:206.5px" width="17" height="8" viewBox="0 0 17 8"><path d="M0.5 0.5L16.5 7.5M16.5 0.5L0.5 7.5" stroke="#1d87ad" stroke-width="0.8"/></svg>
<svg style="left:45.0px;top:398.0px" width="8" height="5.5" viewBox="0 0 8 5.5"><path d="M0.5 0.5L7.5 5.0M7.5 0.5L0.5 5.0" stroke="#1d87ad" stroke-width="0.8"/></svg>
<svg style="left:54.0px;top:398.0px" width="8" height="5.5" viewBox="0 0 8 5.5"><path d="M0.5 0.5L7.5 5.0M7.5 0.5L0.5 5.0" stroke="#1d87ad" stroke-width="0.8"/></svg>
<svg style="left:74.0px;top:398.5px" width="17" height="8" viewBox="0 0 17 8"><path d="M0.5 0.5L16.5 7.5M16.5 0.5L0.5 7.5" stroke="#1d87ad" stroke-width="0.8"/></svg>
<div class="a" style="left:67px;top:66px;width:1px;height:47px;background:#cfe1f7"></div>
<div class="a" style="left:67px;top:130px;width:1px;height:47px;background:#c9c9c9"></div>
<div class="a" style="left:67px;top:194px;width:1px;height:47px;background:#c9c9c9"></div>
<div class="a" style="left:67px;top:258px;width:1px;height:47px;background:#c9c9c9"></div>
<div class="a" style="left:67px;top:322px;width:1px;height:47px;background:#c9c9c9"></div>
<div class="a" style="left:67px;top:386px;width:1px;height:47px;background:#c9c9c9"></div>
<div class="a" style="left:67px;top:450px;width:1px;height:47px;background:#c9c9c9"></div>
<div class="a" style="left:67px;top:514px;width:1px;height:47px;background:#c9c9c9"></div>
</div></div>
<div class="a" style="left:1904px;top:173px;width:11px;height:533px;background:#4d4d4d"></div>
<div class="a" style="left:1905px;top:187px;width:10px;height:232px;background:#696969;border-radius:5px"></div>
<svg style="left:1905px;top:177px" width="9" height="6" viewBox="0 0 9 6"><path d="M0.8 5L4.5 1.2L8.2 5" stroke="#7a7a7a" stroke-width="1.1" fill="none"/></svg>
<svg style="left:1905px;top:697px" width="9" height="6" viewBox="0 0 9 6"><path d="M0.8 1L4.5 4.8L8.2 1" stroke="#a0a0a0" stroke-width="1.1" fill="none"/></svg>
<div class="a" style="left:1671px;top:706px;width:244px;height:1px;background:#444"></div>
<div class="t" style="left:1676px;top:715px;font-size:10.5px;color:#e6e6e6;letter-spacing:-0.39px">34 Pages in 18 Spreads</div>
<svg style="left:1822px;top:713px" width="17" height="12" viewBox="0 0 17 12"><path d="M0.6 4.5H7V11.4H0.6Z M3.5 4.5V0.6H9L11.5 3V9H7" stroke="#c4c4c4" stroke-width="1.1" fill="none"/><path d="M13 10H16L14.5 12Z" fill="#c4c4c4"/></svg>
<svg style="left:1853px;top:713px" width="12" height="12" viewBox="0 0 12 12"><rect x="0.6" y="0.6" width="10.8" height="10.8" stroke="#c4c4c4" stroke-width="1.1" fill="none"/><path d="M6 3V9M3 6H9" stroke="#c4c4c4" stroke-width="1.1"/></svg>
<svg style="left:1881px;top:713px" width="11" height="13" viewBox="0 0 11 13"><path d="M0 2.5H11M3.5 2.5V0.6H7.5V2.5M1.3 2.5L1.8 12.4H9.2L9.7 2.5M4 4.5V10.5M5.5 4.5V10.5M7 4.5V10.5" stroke="#c4c4c4" stroke-width="1" fill="none"/></svg>
<div class="a" style="left:1671px;top:731px;width:244px;height:2px;background:#3c3c3c"></div>
<div class="a" style="left:1671px;top:855px;width:244px;height:2px;background:#3c3c3c"></div>
<div class="a" style="left:1671px;top:917px;width:244px;height:2px;background:#3c3c3c"></div>
<!-- Paragraph Styles -->
<div class="a" style="left:1671px;top:733px;width:244px;height:27px;background:#424242"></div>
<div class="a" style="left:1671px;top:733px;width:118px;height:27px;background:#535353"></div>
<svg style="left:1678px;top:742px" width="6" height="10" viewBox="0 0 6 10"><path d="M0.7 3.6L3 1L5.3 3.6M0.7 6.4L3 9L5.3 6.4" stroke="#c8c8c8" stroke-width="1" fill="none"/></svg>
<div class="t b" style="left:1689px;top:742px;font-size:12px;color:#ececec;letter-spacing:-0.72px">Paragraph Styles</div>
<svg style="left:1899.5px;top:743px" width="11" height="8" viewBox="0 0 11 8"><path d="M0 0.5H11M0 2.8H11M0 5.1H11M0 7.4H11" stroke="#c4c4c4" stroke-width="1"/></svg>
<div class="t" style="left:1676px;top:769px;font-size:10.5px;color:#e2e2e2;letter-spacing:-0.22px">[Basic Paragraph]</div>
<div class="t" style="left:1865px;top:767px;font-size:12px;color:#c4c4c4;letter-spacing:-0.5px">[a+]</div>
<svg style="left:1897px;top:767px" width="8" height="13" viewBox="0 0 8 13"><path d="M5.2 0L0.8 7H3.6L2.4 13L7.4 5.4H4.3Z" fill="#c4c4c4"/></svg>
<div class="a" style="left:1671px;top:787px;width:244px;height:20px;background:#4d6a8c"></div>
<div class="t b" style="left:1706px;top:792px;font-size:10.5px;color:#f4f4f4;letter-spacing:-0.1px">[Basic Paragraph]</div>
<svg style="left:1678px;top:836px" width="14" height="12" viewBox="0 0 14 12"><rect x="3.5" y="0.6" width="9.8" height="9" stroke="#c4c4c4" stroke-width="1.1" fill="none"/><rect x="0.6" y="3" width="8" height="8" fill="#535353" stroke="#c4c4c4" stroke-width="1.1"/><path d="M3 7H6.5M5 5.2L6.8 7L5 8.8" stroke="#c4c4c4" stroke-width="1" fill="none"/></svg>
<svg style="left:1757px;top:835px" width="18" height="13" viewBox="0 0 18 13"><path d="M0 2.5H5L6.5 4.5H13V13H0Z" fill="#c4c4c4"/><path d="M7 11V6.5M5 8.3L7 6.2L9 8.3" stroke="#535353" stroke-width="1.2" fill="none"/><circle cx="15" cy="3" r="2.6" fill="#2d8ceb"/></svg>
<div class="a" style="left:1784px;top:832px;width:1px;height:20px;background:#494949"></div>
<svg style="left:1796px;top:837px" width="14" height="11" viewBox="0 0 14 11"><path d="M0 0.5H5L6.5 2.5H14V11H0Z" fill="#c4c4c4"/></svg>
<div class="t b" style="left:1823px;top:835px;font-size:12px;color:#7a7a7a">¶</div><svg style="left:1831px;top:838px" width="7" height="8"><path d="M0 7L6 1M1 2L5 6" stroke="#7a7a7a" stroke-width="0.9"/></svg>
<svg style="left:1853px;top:836px" width="12" height="12" viewBox="0 0 12 12"><rect x="0.6" y="0.6" width="10.8" height="10.8" stroke="#c4c4c4" stroke-width="1.1" fill="none"/><path d="M6 3V9M3 6H9" stroke="#c4c4c4" stroke-width="1.1"/></svg>
<svg style="left:1881px;top:836px" width="11" height="13" viewBox="0 0 11 13"><path d="M0 2.5H11M3.5 2.5V0.6H7.5V2.5M1.3 2.5L1.8 12.4H9.2L9.7 2.5M4 4.5V10.5M5.5 4.5V10.5M7 4.5V10.5" stroke="#7a7a7a" stroke-width="1" fill="none"/></svg>
<!-- Stroke -->
<div class="a" style="left:1671px;top:857px;width:244px;height:27px;background:#424242"></div>
<div class="a" style="left:1671px;top:857px;width:64px;height:27px;background:#535353"></div>
<svg style="left:1678px;top:866px" width="6" height="10" viewBox="0 0 6 10"><path d="M0.7 3.6L3 1L5.3 3.6M0.7 6.4L3 9L5.3 6.4" stroke="#c8c8c8" stroke-width="1" fill="none"/></svg>
<div class="t b" style="left:1689px;top:866px;font-size:12px;color:#ececec;letter-spacing:-0.66px">Stroke</div>
<div class="a" style="left:1735px;top:857px;width:65px;height:26px;background:#494949"></div>
<div class="t b" style="left:1747px;top:866px;font-size:12px;color:#a4a4a4;letter-spacing:-0.89px">Swatches</div>
<div class="a" style="left:1801px;top:857px;width:74px;height:26px;background:#494949"></div>
<div class="t b" style="left:1812px;top:866px;font-size:12px;color:#a4a4a4;letter-spacing:-0.90px">CC Libraries</div>
<svg style="left:1899.5px;top:867px" width="11" height="8" viewBox="0 0 11 8"><path d="M0 0.5H11M0 2.8H11M0 5.1H11M0 7.4H11" stroke="#c4c4c4" stroke-width="1"/></svg>
<div class="t" style="left:1706px;top:896px;font-size:10.5px;color:#e2e2e2;letter-spacing:-0.14px">Weight:</div>
<div class="dfld" style="left:1746px;top:890px;width:88px;height:21px"></div><div class="a" style="left:1763px;top:891px;width:1px;height:19px;background:#6a6a6a"></div><div class="a" style="left:1815px;top:891px;width:1px;height:19px;background:#6a6a6a"></div>
<svg style="left:1751px;top:894px" width="8" height="14" viewBox="0 0 8 14"><path d="M0.8 5L4 1.6L7.2 5M0.8 9L4 12.4L7.2 9" stroke="#d0d0d0" stroke-width="1.1" fill="none"/></svg>
<svg style="left:1820px;top:898px" width="9" height="6" viewBox="0 0 9 6"><path d="M0.8 0.8L4.5 4.6L8.2 0.8" stroke="#d0d0d0" stroke-width="1.3" fill="none"/></svg>
<!-- Object Styles -->
<div class="a" style="left:1671px;top:919px;width:244px;height:27px;background:#424242"></div>
<div class="a" style="left:1671px;top:919px;width:96px;height:27px;background:#535353"></div>
<svg style="left:1678px;top:928px" width="6" height="10" viewBox="0 0 6 10"><path d="M0.7 3.6L3 1L5.3 3.6M0.7 6.4L3 9L5.3 6.4" stroke="#c8c8c8" stroke-width="1" fill="none"/></svg>
<div class="t b" style="left:1689px;top:928px;font-size:12px;color:#ececec;letter-spacing:-0.76px">Object Styles</div>
<div class="a" style="left:1767px;top:919px;width:77px;height:26px;background:#494949"></div>
<div class="t b" style="left:1779px;top:928px;font-size:12px;color:#a4a4a4;letter-spacing:-0.50px">Text Wrap</div>
<svg style="left:1899.5px;top:929px" width="11" height="8" viewBox="0 0 11 8"><path d="M0 0.5H11M0 2.8H11M0 5.1H11M0 7.4H11" stroke="#c4c4c4" stroke-width="1"/></svg>
<div class="t" style="left:1676px;top:954px;font-size:10.5px;color:#e2e2e2;letter-spacing:-0.25px">[Basic Graphics Frame]+</div>
<svg style="left:1897px;top:952px" width="8" height="13" viewBox="0 0 8 13"><path d="M5.2 0L0.8 7H3.6L2.4 13L7.4 5.4H4.3Z" fill="#c4c4c4"/></svg>
<div class="a" style="left:1671px;top:972px;width:232px;height:21px;background:#4d6a8c"></div>
<div class="t b" style="left:1709px;top:977px;font-size:10.5px;color:#f4f4f4;letter-spacing:-0.06px">[Basic Graphics Frame]+</div>
<div class="t" style="left:1709px;top:999px;font-size:10.5px;color:#e2e2e2;letter-spacing:-0.27px">[Basic Text Frame]</div>
<svg style="left:1879px;top:977px" width="11" height="11" viewBox="0 0 11 11"><path d="M2.5 0.6H8.5A2 2 0 0 0 10.4 2.5V8.5A2 2 0 0 0 8.5 10.4H2.5A2 2 0 0 0 0.6 8.5V2.5A2 2 0 0 0 2.5 0.6Z" stroke="#e4e4e4" stroke-width="1.1" fill="none"/></svg>
<svg style="left:1879px;top:998px" width="11" height="11" viewBox="0 0 11 11"><rect x="0.6" y="0.6" width="9.8" height="9.8" rx="1.5" stroke="#e0e0e0" stroke-width="1.1" fill="none"/><path d="M3 3.2H8M5.5 3.2V8" stroke="#e0e0e0" stroke-width="1.2"/></svg>
<div class="a" style="left:1903px;top:972px;width:12px;height:43px;background:#4d4d4d"></div>
<svg style="left:1905px;top:976px" width="9" height="6" viewBox="0 0 9 6"><path d="M0.8 5L4.5 1.2L8.2 5" stroke="#6c6c6c" stroke-width="1.1" fill="none"/></svg>
<svg style="left:1905px;top:1005px" width="9" height="6" viewBox="0 0 9 6"><path d="M0.8 1L4.5 4.8L8.2 1" stroke="#6c6c6c" stroke-width="1.1" fill="none"/></svg>
<div class="a" style="left:1671px;top:1015px;width:244px;height:1px;background:#444"></div>
<svg style="left:1768px;top:1022px" width="14" height="11" viewBox="0 0 14 11"><path d="M0 0.5H5L6.5 2.5H14V11H0Z" fill="#c4c4c4"/></svg>
<svg style="left:1794px;top:1020px" width="18" height="13" viewBox="0 0 18 13"><rect x="0.5" y="0.5" width="8" height="8" fill="#6a6a6a" stroke="#c4c4c4"/><rect x="3.5" y="3.5" width="8" height="8" fill="#333" stroke="#c4c4c4"/><path d="M13.5 9.5A3 3 0 1 1 17.5 9.5" stroke="#7a7a7a" fill="none"/></svg>
<svg style="left:1822px;top:1021px" width="19" height="11" viewBox="0 0 19 11"><rect x="0.5" y="0.5" width="9" height="9" rx="2" fill="none" stroke="#c4c4c4" stroke-dasharray="2 1"/><path d="M12 8L17 2M13 2L16 8" stroke="#7a7a7a" stroke-width="1"/></svg>
<svg style="left:1853px;top:1021px" width="12" height="12" viewBox="0 0 12 12"><rect x="0.6" y="0.6" width="10.8" height="10.8" stroke="#c4c4c4" stroke-width="1.1" fill="none"/><path d="M6 3V9M3 6H9" stroke="#c4c4c4" stroke-width="1.1"/></svg>
<svg style="left:1881px;top:1021px" width="11" height="13" viewBox="0 0 11 13"><path d="M0 2.5H11M3.5 2.5V0.6H7.5V2.5M1.3 2.5L1.8 12.4H9.2L9.7 2.5M4 4.5V10.5M5.5 4.5V10.5M7 4.5V10.5" stroke="#7a7a7a" stroke-width="1" fill="none"/></svg>
<div class="a" style="left:0;top:1039px;width:1915px;height:2px;background:#26323a"></div>
<div class="a" style="left:45px;top:1040px;width:288px;height:1px;background:#8e979d"></div>
<!-- status bar -->
<div class="t" style="left:12px;top:1026px;font-size:10.5px;color:#e8e8e8;letter-spacing:-0.54px">12.5%</div>
<svg style="left:54px;top:1028.5px" width="9" height="6" viewBox="0 0 9 6"><path d="M0.8 0.8L4.5 4.6L8.2 0.8" stroke="#c8c8c8" stroke-width="1.2" fill="none"/></svg>
<svg style="left:75px;top:1027px" width="9" height="9" viewBox="0 0 9 9"><path d="M1 0V9" stroke="#cfcfcf" stroke-width="1.6"/><path d="M8.5 0L2.5 4.5L8.5 9Z" fill="#cfcfcf"/></svg>
<svg style="left:97px;top:1027px" width="6" height="9" viewBox="0 0 6 9"><path d="M6 0L0 4.5L6 9Z" fill="#cfcfcf"/></svg>
<div class="dfld" style="left:114px;top:1022px;width:91px;height:18px;border-radius:2px"></div><div class="a" style="left:186px;top:1023px;width:1px;height:16px;background:#6a6a6a"></div>
<div class="t" style="left:119px;top:1026px;font-size:10.5px;color:#f0f0f0">5</div>
<svg style="left:191.5px;top:1028.5px" width="9" height="6" viewBox="0 0 9 6"><path d="M0.8 0.8L4.5 4.6L8.2 0.8" stroke="#c8c8c8" stroke-width="1.2" fill="none"/></svg>
<svg style="left:217px;top:1027px" width="6" height="9" viewBox="0 0 6 9"><path d="M0 0L6 4.5L0 9Z" fill="#cfcfcf"/></svg>
<svg style="left:236px;top:1027px" width="9" height="9" viewBox="0 0 9 9"><path d="M8 0V9" stroke="#cfcfcf" stroke-width="1.6"/><path d="M0.5 0L6.5 4.5L0.5 9Z" fill="#cfcfcf"/></svg>
<svg style="left:262px;top:1026px" width="16" height="11" viewBox="0 0 16 11"><path d="M1.5 9A5 5 0 1 1 11 9" stroke="#bdbdbd" stroke-width="1.8" fill="none"/><path d="M6.3 2V7H9.5" stroke="#bdbdbd" stroke-width="1.1" fill="none"/><path d="M12.5 8.5H15.5L14 10.5Z" fill="#bdbdbd"/></svg>
<div class="t" style="left:294px;top:1026px;font-size:10.5px;color:#e8e8e8;letter-spacing:-0.04px">[Basic] (working)</div>
<svg style="left:396px;top:1028.5px" width="9" height="6" viewBox="0 0 9 6"><path d="M0.8 0.8L4.5 4.6L8.2 0.8" stroke="#c8c8c8" stroke-width="1.2" fill="none"/></svg>
<div class="a" style="left:420px;top:1026px;width:10px;height:10px;border-radius:50%;background:#2fae2c"></div>
<div class="t" style="left:436px;top:1026px;font-size:10.5px;color:#e8e8e8;letter-spacing:-0.22px">No errors</div>
<svg style="left:499px;top:1028.5px" width="9" height="6" viewBox="0 0 9 6"><path d="M0.8 0.8L4.5 4.6L8.2 0.8" stroke="#9a9a9a" stroke-width="1.2" fill="none"/></svg>
<svg style="left:1465px;top:1026px" width="14" height="11" viewBox="0 0 14 11"><rect x="0.5" y="0.5" width="13" height="10" fill="none" stroke="#c4c4c4"/><path d="M7 0V11" stroke="#c4c4c4" stroke-width="1.4"/></svg>
<div class="a" style="left:1486px;top:1026px;width:11px;height:11px;background:radial-gradient(circle,#6a6a6a 0 0.6px,transparent 0.8px) 0 0/2px 2px;clip-path:polygon(100% 0,100% 100%,0 100%)"></div>
</div>
</body></html>
